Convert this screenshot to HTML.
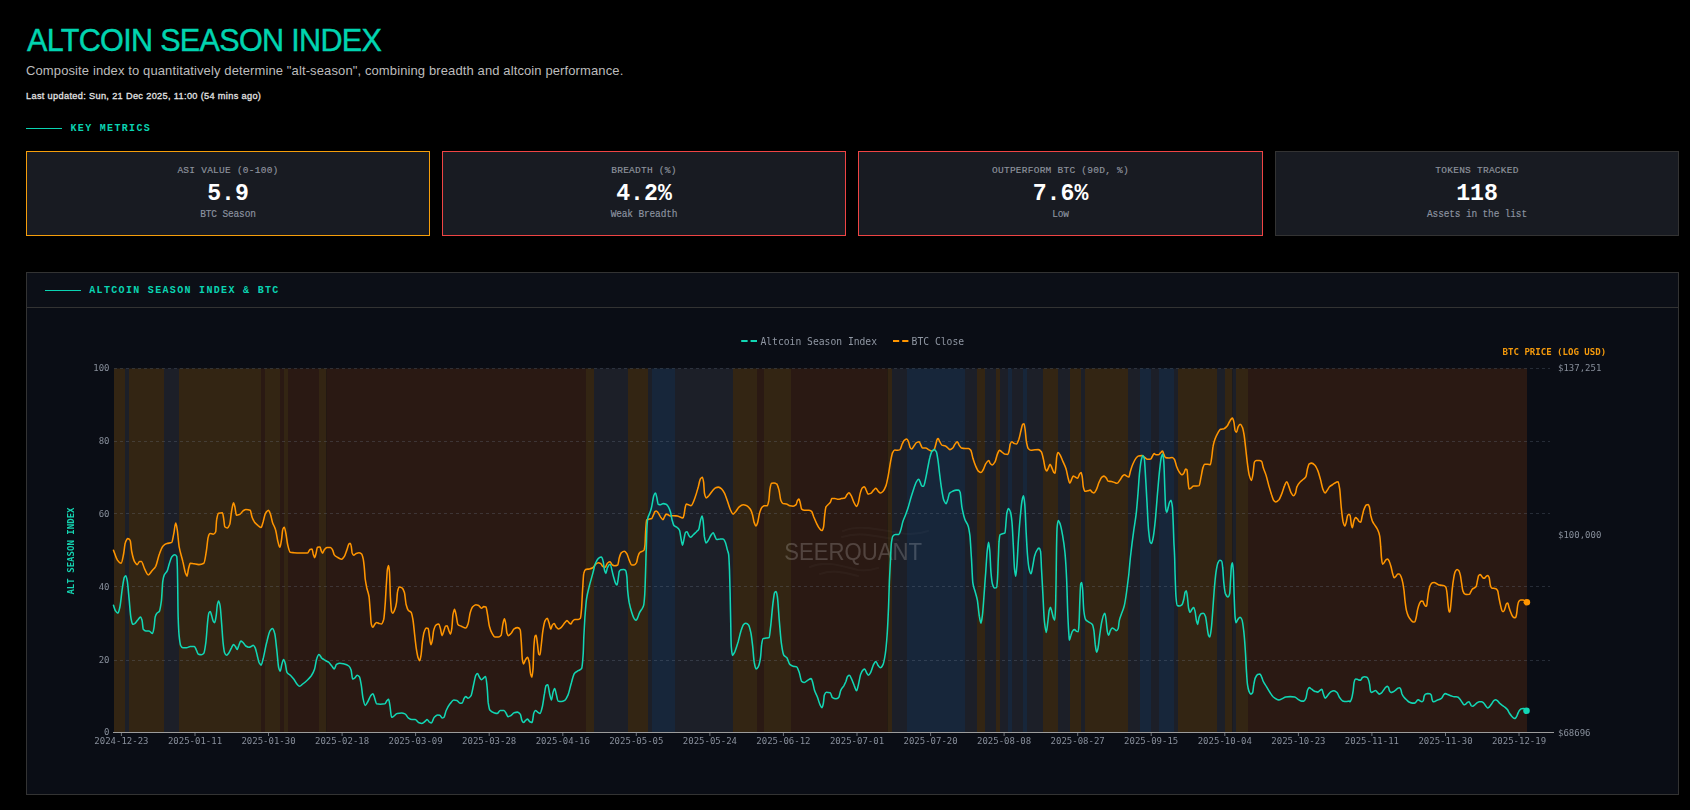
<!DOCTYPE html>
<html lang="en"><head><meta charset="utf-8"><title>Altcoin Season Index</title>
<style>
html,body{margin:0;padding:0;background:#000;}
body{width:1690px;height:810px;position:relative;overflow:hidden;font-family:"Liberation Sans",sans-serif;color:#fff;}
.abs{position:absolute;white-space:nowrap;line-height:1;}
h1{margin:0;font-weight:400;font-size:32px;color:#00d4b0;left:27px;top:24.3px;letter-spacing:-0.72px;transform:scaleX(0.955);transform-origin:0 0;-webkit-text-stroke:0.45px #00d4b0;}
.sub{left:26px;top:64px;font-size:13px;color:#bdbdbd;letter-spacing:0.115px;}
.upd{left:26px;top:91.6px;font-size:9.2px;color:#e4e4e4;font-weight:400;-webkit-text-stroke:0.28px #e4e4e4;letter-spacing:0.34px;}
.sec{font-family:"Liberation Mono",monospace;font-weight:700;font-size:10px;color:#0ad4b2;letter-spacing:1.32px;}
.bar{position:absolute;height:1px;background:#0ad4b2;}
.card{position:absolute;top:151px;width:404.00px;height:85px;box-sizing:border-box;background:#181b22;border:1px solid #333;text-align:center;font-family:"Liberation Mono",monospace;}
.card div{position:absolute;left:0;right:0;white-space:nowrap;line-height:1;}
.cl{top:13.7px;font-size:9.5px;color:#8f949e;letter-spacing:0.25px;-webkit-text-stroke:0.15px #8f949e;}
.cv{top:30.5px;font-size:23.2px;font-weight:700;color:#fff;}
.cs{top:58px;font-size:9.5px;color:#8c93a0;letter-spacing:-0.15px;-webkit-text-stroke:0.15px #8c93a0;transform:scaleY(1.13);transform-origin:50% 82%;}
.panel{position:absolute;left:26px;top:272px;width:1653px;height:523px;box-sizing:border-box;background:#0a0d15;border:1px solid #333;}
.phead{position:absolute;left:0;right:0;top:0;height:34px;border-bottom:1px solid #333;background:#0c0f17;}
svg{position:absolute;left:0;top:0;will-change:transform;}
svg text{font-family:"DejaVu Sans Mono","Liberation Mono",monospace;}
.tk{font-size:9px;fill:#878e9a;}
.lg{font-size:9.7px;fill:#9097a3;}
.at{font-size:9.05px;font-weight:700;}
</style></head>
<body>
<h1 class="abs">ALTCOIN SEASON INDEX</h1>
<div class="abs sub">Composite index to quantitatively determine "alt-season", combining breadth and altcoin performance.</div>
<div class="abs upd">Last updated: Sun, 21 Dec 2025, 11:00 (54 mins ago)</div>
<div class="bar" style="left:26px;top:128px;width:36px"></div>
<div class="abs sec" style="left:70.5px;top:124px">KEY METRICS</div>
<div class="card" style="left:26px;width:404px;border-color:#f59e0b"><div class="cl">ASI VALUE (0-100)</div><div class="cv">5.9</div><div class="cs">BTC Season</div></div>
<div class="card" style="left:442px;width:404px;border-color:#ef4444"><div class="cl">BREADTH (%)</div><div class="cv">4.2%</div><div class="cs">Weak Breadth</div></div>
<div class="card" style="left:858px;width:405px;border-color:#ef4444"><div class="cl">OUTPERFORM BTC (90D, %)</div><div class="cv">7.6%</div><div class="cs">Low</div></div>
<div class="card" style="left:1275px;width:404px;border-color:#333333"><div class="cl">TOKENS TRACKED</div><div class="cv">118</div><div class="cs">Assets in the list</div></div>

<div class="panel"><div class="phead"></div></div>
<div class="bar" style="left:45px;top:290px;width:36px"></div>
<div class="abs sec" style="left:89.3px;top:286px">ALTCOIN SEASON INDEX &amp; BTC</div>
<svg width="1690" height="810" viewBox="0 0 1690 810">
<rect x="114" y="368.5" width="11" height="364.0" fill="#332513"/>
<rect x="125" y="368.5" width="4" height="364.0" fill="#1c1f28"/>
<rect x="129" y="368.5" width="35" height="364.0" fill="#332513"/>
<rect x="164" y="368.5" width="15" height="364.0" fill="#1c1f28"/>
<rect x="179" y="368.5" width="82" height="364.0" fill="#332513"/>
<rect x="261" y="368.5" width="4" height="364.0" fill="#2a1913"/>
<rect x="265" y="368.5" width="15" height="364.0" fill="#332513"/>
<rect x="280" y="368.5" width="4" height="364.0" fill="#2a1913"/>
<rect x="284" y="368.5" width="4" height="364.0" fill="#332513"/>
<rect x="288" y="368.5" width="31" height="364.0" fill="#2a1913"/>
<rect x="319" y="368.5" width="7.5" height="364.0" fill="#332513"/>
<rect x="326.5" y="368.5" width="259.5" height="364.0" fill="#2a1913"/>
<rect x="586" y="368.5" width="8" height="364.0" fill="#332513"/>
<rect x="594" y="368.5" width="34" height="364.0" fill="#1c1f28"/>
<rect x="628" y="368.5" width="20" height="364.0" fill="#332513"/>
<rect x="648" y="368.5" width="4" height="364.0" fill="#1c1f28"/>
<rect x="652" y="368.5" width="23" height="364.0" fill="#17263a"/>
<rect x="675" y="368.5" width="58" height="364.0" fill="#1c1f28"/>
<rect x="733" y="368.5" width="24" height="364.0" fill="#332513"/>
<rect x="757" y="368.5" width="7" height="364.0" fill="#2a1913"/>
<rect x="764" y="368.5" width="27" height="364.0" fill="#332513"/>
<rect x="791" y="368.5" width="96.5" height="364.0" fill="#2a1913"/>
<rect x="887.5" y="368.5" width="4.5" height="364.0" fill="#332513"/>
<rect x="892" y="368.5" width="15" height="364.0" fill="#1c1f28"/>
<rect x="907" y="368.5" width="58" height="364.0" fill="#17263a"/>
<rect x="965" y="368.5" width="12" height="364.0" fill="#1c1f28"/>
<rect x="977" y="368.5" width="8" height="364.0" fill="#332513"/>
<rect x="985" y="368.5" width="11" height="364.0" fill="#1c1f28"/>
<rect x="996" y="368.5" width="4" height="364.0" fill="#332513"/>
<rect x="1000" y="368.5" width="8" height="364.0" fill="#1c1f28"/>
<rect x="1008" y="368.5" width="4" height="364.0" fill="#17263a"/>
<rect x="1012" y="368.5" width="11" height="364.0" fill="#1c1f28"/>
<rect x="1023" y="368.5" width="4" height="364.0" fill="#17263a"/>
<rect x="1027" y="368.5" width="16" height="364.0" fill="#1c1f28"/>
<rect x="1043" y="368.5" width="15" height="364.0" fill="#332513"/>
<rect x="1058" y="368.5" width="12" height="364.0" fill="#1c1f28"/>
<rect x="1070" y="368.5" width="11" height="364.0" fill="#332513"/>
<rect x="1081" y="368.5" width="4" height="364.0" fill="#1c1f28"/>
<rect x="1085" y="368.5" width="43" height="364.0" fill="#332513"/>
<rect x="1128" y="368.5" width="12" height="364.0" fill="#1c1f28"/>
<rect x="1140" y="368.5" width="11" height="364.0" fill="#17263a"/>
<rect x="1151" y="368.5" width="8" height="364.0" fill="#1c1f28"/>
<rect x="1159" y="368.5" width="15" height="364.0" fill="#17263a"/>
<rect x="1174" y="368.5" width="4" height="364.0" fill="#1c1f28"/>
<rect x="1178" y="368.5" width="39" height="364.0" fill="#332513"/>
<rect x="1217" y="368.5" width="8" height="364.0" fill="#1c1f28"/>
<rect x="1225" y="368.5" width="7.5" height="364.0" fill="#332513"/>
<rect x="1232.5" y="368.5" width="3.5" height="364.0" fill="#1c1f28"/>
<rect x="1236" y="368.5" width="12" height="364.0" fill="#332513"/>
<rect x="1248" y="368.5" width="279" height="364.0" fill="#2a1913"/>
<line x1="113.5" x2="1550.3" y1="660.5" y2="660.5" stroke="#7d8aa0" stroke-opacity="0.25" stroke-width="1" stroke-dasharray="3 3" shape-rendering="crispEdges"/>
<line x1="113.5" x2="1550.3" y1="586.5" y2="586.5" stroke="#7d8aa0" stroke-opacity="0.25" stroke-width="1" stroke-dasharray="3 3" shape-rendering="crispEdges"/>
<line x1="113.5" x2="1550.3" y1="513.5" y2="513.5" stroke="#7d8aa0" stroke-opacity="0.25" stroke-width="1" stroke-dasharray="3 3" shape-rendering="crispEdges"/>
<line x1="113.5" x2="1550.3" y1="441.5" y2="441.5" stroke="#7d8aa0" stroke-opacity="0.25" stroke-width="1" stroke-dasharray="3 3" shape-rendering="crispEdges"/>
<line x1="113.5" x2="1550.3" y1="368.5" y2="368.5" stroke="#7d8aa0" stroke-opacity="0.25" stroke-width="1" stroke-dasharray="3 3" shape-rendering="crispEdges"/>
<rect x="113" y="732" width="1441" height="1" fill="#9c9c9c"/>
<text class="tk" x="109.5" y="735.3" text-anchor="end">0</text>
<text class="tk" x="109.5" y="662.5" text-anchor="end">20</text>
<text class="tk" x="109.5" y="589.7" text-anchor="end">40</text>
<text class="tk" x="109.5" y="516.9" text-anchor="end">60</text>
<text class="tk" x="109.5" y="444.1" text-anchor="end">80</text>
<text class="tk" x="109.5" y="371.3" text-anchor="end">100</text>
<rect x="120.9" y="733" width="1" height="3" fill="#6f747c"/>
<text class="tk" x="121.4" y="744.1" text-anchor="middle">2024-12-23</text>
<rect x="194.5" y="733" width="1" height="3" fill="#6f747c"/>
<text class="tk" x="195.0" y="744.1" text-anchor="middle">2025-01-11</text>
<rect x="268.0" y="733" width="1" height="3" fill="#6f747c"/>
<text class="tk" x="268.5" y="744.1" text-anchor="middle">2025-01-30</text>
<rect x="341.6" y="733" width="1" height="3" fill="#6f747c"/>
<text class="tk" x="342.1" y="744.1" text-anchor="middle">2025-02-18</text>
<rect x="415.1" y="733" width="1" height="3" fill="#6f747c"/>
<text class="tk" x="415.6" y="744.1" text-anchor="middle">2025-03-09</text>
<rect x="488.7" y="733" width="1" height="3" fill="#6f747c"/>
<text class="tk" x="489.2" y="744.1" text-anchor="middle">2025-03-28</text>
<rect x="562.3" y="733" width="1" height="3" fill="#6f747c"/>
<text class="tk" x="562.8" y="744.1" text-anchor="middle">2025-04-16</text>
<rect x="635.8" y="733" width="1" height="3" fill="#6f747c"/>
<text class="tk" x="636.3" y="744.1" text-anchor="middle">2025-05-05</text>
<rect x="709.4" y="733" width="1" height="3" fill="#6f747c"/>
<text class="tk" x="709.9" y="744.1" text-anchor="middle">2025-05-24</text>
<rect x="782.9" y="733" width="1" height="3" fill="#6f747c"/>
<text class="tk" x="783.4" y="744.1" text-anchor="middle">2025-06-12</text>
<rect x="856.5" y="733" width="1" height="3" fill="#6f747c"/>
<text class="tk" x="857.0" y="744.1" text-anchor="middle">2025-07-01</text>
<rect x="930.1" y="733" width="1" height="3" fill="#6f747c"/>
<text class="tk" x="930.6" y="744.1" text-anchor="middle">2025-07-20</text>
<rect x="1003.6" y="733" width="1" height="3" fill="#6f747c"/>
<text class="tk" x="1004.1" y="744.1" text-anchor="middle">2025-08-08</text>
<rect x="1077.2" y="733" width="1" height="3" fill="#6f747c"/>
<text class="tk" x="1077.7" y="744.1" text-anchor="middle">2025-08-27</text>
<rect x="1150.7" y="733" width="1" height="3" fill="#6f747c"/>
<text class="tk" x="1151.2" y="744.1" text-anchor="middle">2025-09-15</text>
<rect x="1224.3" y="733" width="1" height="3" fill="#6f747c"/>
<text class="tk" x="1224.8" y="744.1" text-anchor="middle">2025-10-04</text>
<rect x="1297.9" y="733" width="1" height="3" fill="#6f747c"/>
<text class="tk" x="1298.4" y="744.1" text-anchor="middle">2025-10-23</text>
<rect x="1371.4" y="733" width="1" height="3" fill="#6f747c"/>
<text class="tk" x="1371.9" y="744.1" text-anchor="middle">2025-11-11</text>
<rect x="1445.0" y="733" width="1" height="3" fill="#6f747c"/>
<text class="tk" x="1445.5" y="744.1" text-anchor="middle">2025-11-30</text>
<rect x="1518.5" y="733" width="1" height="3" fill="#6f747c"/>
<text class="tk" x="1519.0" y="744.1" text-anchor="middle">2025-12-19</text>
<text class="tk" x="1558" y="371.3">$137,251</text>
<text class="tk" x="1558" y="538">$100,000</text>
<text class="tk" x="1558" y="735.6">$68696</text>
<text class="at" fill="#f59a0c" x="1502.6" y="354.6">BTC PRICE (LOG USD)</text>
<text class="at" fill="#14d3b0" transform="translate(73.8,551) rotate(-90)" text-anchor="middle">ALT SEASON INDEX</text>
<g fill="none" stroke="#ffffff" stroke-opacity="0.028" stroke-width="2.2" stroke-linecap="round"><path d="M843,531 C860,524 880,530 900,533 C912,535 920,534 928,531"/><path d="M842,537 C860,531 880,537 898,540"/><path d="M810,567 C826,560 842,566 858,570 C866,571 872,570 878,568"/><path d="M820,574 C834,569 846,573 858,576"/></g>
<text x="784.3" y="560" style="font-family:'Liberation Sans',sans-serif;font-size:23.3px" fill="#ffffff" fill-opacity="0.19" textLength="137.8" lengthAdjust="spacingAndGlyphs">SEERQUANT</text>
<path d="M113.5,550.2C114.8,553.5 116.1,558.4 117.4,560.1C118.6,561.7 119.9,563.3 121.1,563.3C121.9,563.3 122.8,557.9 123.6,554.0C124.2,551.2 124.7,544.4 125.3,542.8C126.1,540.5 127.0,538.6 127.8,538.6C128.6,538.6 129.4,539.2 130.2,540.4C130.7,541.0 131.2,549.0 131.7,551.5C132.7,556.4 133.7,560.2 134.7,561.9C135.5,563.2 136.3,564.6 137.2,564.6C138.0,564.6 138.8,561.4 139.6,561.4C140.2,561.4 140.8,561.4 141.4,561.4C142.4,561.4 143.5,566.7 144.6,568.8C145.8,571.2 147.0,574.9 148.3,574.9C149.5,574.9 150.7,572.2 152.0,570.7C153.2,569.3 154.4,568.5 155.7,566.3C156.9,564.1 158.1,557.2 159.4,554.0C160.6,550.7 161.9,547.3 163.1,546.0C164.3,544.8 165.6,544.0 166.8,543.6C168.4,543.0 170.1,543.2 171.7,542.4C172.4,542.0 173.0,537.3 173.7,534.2C174.4,531.1 175.0,523.1 175.7,523.1C176.2,523.1 176.7,526.5 177.2,529.3C177.8,532.9 178.5,542.8 179.1,546.5C180.4,553.6 181.6,556.1 182.8,561.4C183.7,564.9 184.5,570.1 185.3,572.5C185.9,574.1 186.5,576.2 187.0,576.2C187.5,576.2 188.0,570.7 188.5,568.8C189.1,566.5 189.7,563.3 190.2,563.3C191.5,563.3 192.7,563.7 193.9,563.8C195.6,564.1 197.2,564.6 198.9,564.6C200.5,564.6 202.2,564.2 203.8,563.3C204.7,562.9 205.5,556.3 206.3,551.5C207.0,547.6 207.6,538.6 208.3,536.7C208.8,535.0 209.4,533.5 210.0,533.5C211.1,533.5 212.1,534.2 213.2,534.2C214.0,534.2 214.9,533.5 215.7,531.7C216.0,531.0 216.3,521.1 216.7,519.4C217.3,515.9 218.0,513.4 218.6,513.2C219.9,512.9 221.1,512.7 222.3,512.7C222.8,512.7 223.2,515.9 223.6,518.1C224.0,520.4 224.4,526.4 224.8,526.8C225.6,527.6 226.5,528.0 227.3,528.0C228.1,528.0 228.9,526.4 229.8,524.3C230.3,522.8 230.9,515.2 231.5,512.0C232.1,508.3 232.8,502.8 233.5,502.8C234.0,502.8 234.4,505.2 234.9,507.0C235.4,508.9 235.9,515.2 236.4,515.2C237.5,515.2 238.6,514.8 239.6,514.4C240.9,514.0 242.1,511.5 243.3,510.7C244.2,510.2 245.0,509.5 245.8,509.5C247.3,509.5 248.8,509.7 250.2,510.2C250.8,510.5 251.4,515.4 252.0,516.9C252.8,519.1 253.6,520.7 254.4,521.9C255.7,523.5 256.9,524.6 258.1,525.6C259.1,526.3 260.1,527.5 261.1,527.5C261.8,527.5 262.4,523.9 263.1,521.9C263.9,519.3 264.7,514.5 265.6,513.2C266.5,511.6 267.5,510.2 268.5,510.2C269.2,510.2 269.8,512.6 270.5,514.4C271.2,516.3 271.8,520.4 272.5,522.4C273.5,525.3 274.4,526.1 275.4,529.3C276.3,531.9 277.1,538.6 277.9,541.6C278.6,544.0 279.2,547.3 279.9,547.3C280.5,547.3 281.0,542.6 281.6,539.1C282.0,536.7 282.4,530.2 282.8,529.3C283.3,528.1 283.8,527.3 284.3,527.3C284.8,527.3 285.3,530.6 285.8,533.0C286.5,536.1 287.1,542.7 287.8,545.3C288.6,548.5 289.4,552.0 290.2,552.2C291.5,552.6 292.7,552.6 293.9,552.7C296.0,552.9 298.1,553.0 300.1,553.0C302.6,553.0 305.1,553.0 307.5,553.0C308.4,553.0 309.2,549.9 310.0,549.5C310.7,549.2 311.3,549.0 312.0,549.0C312.4,549.0 312.8,552.7 313.2,554.0C313.7,555.5 314.2,557.6 314.7,557.6C315.2,557.6 315.7,554.6 316.2,552.7C316.6,551.1 317.0,547.4 317.4,547.3C318.0,547.1 318.6,547.0 319.1,547.0C319.4,547.0 319.7,547.1 320.0,547.1C320.4,547.2 320.9,550.1 321.3,551.0C321.7,551.9 322.2,553.1 322.6,553.1C323.2,553.1 323.7,550.4 324.3,549.7C325.2,548.7 326.0,547.6 326.9,547.5C328.1,547.4 329.2,547.4 330.4,547.4C331.1,547.4 331.8,548.5 332.5,549.7C333.1,550.6 333.7,554.1 334.3,554.9C335.3,556.2 336.3,556.6 337.3,557.2C338.7,558.1 340.2,559.2 341.6,559.2C342.5,559.2 343.3,557.8 344.2,556.6C345.1,555.4 345.9,552.4 346.8,550.1C347.5,548.2 348.2,544.9 348.9,544.1C349.3,543.7 349.7,543.2 350.1,543.2C350.4,543.2 350.8,544.3 351.1,545.4C351.5,546.5 351.8,551.7 352.1,552.7C352.6,554.1 353.1,555.3 353.5,555.3C354.5,555.3 355.4,553.8 356.3,553.4C357.2,553.1 358.0,552.7 358.9,552.7C359.8,552.7 360.6,553.1 361.5,553.8C362.1,554.2 362.6,556.2 363.2,558.8C363.5,560.1 363.8,563.0 364.1,565.7C364.5,569.3 364.9,576.0 365.2,579.0C365.8,583.0 366.3,585.5 366.8,588.0C367.6,591.5 368.3,592.2 369.1,597.0C369.4,599.4 369.8,606.0 370.2,610.5C370.6,614.9 370.9,622.6 371.3,624.0C371.8,625.9 372.4,627.3 372.9,627.3C373.5,627.3 374.1,625.2 374.7,624.4C375.3,623.6 375.9,622.4 376.5,622.4C377.4,622.4 378.3,623.3 379.2,623.5C379.9,623.7 380.7,624.0 381.4,624.0C382.2,624.0 382.9,622.1 383.7,619.5C384.2,617.6 384.7,610.6 385.2,603.7C385.6,598.8 386.0,589.2 386.4,583.5C386.8,577.8 387.1,570.7 387.5,568.9C387.9,567.0 388.3,565.5 388.6,565.5C388.9,565.5 389.2,568.7 389.5,572.2C389.8,575.8 390.1,591.6 390.4,597.0C390.8,603.7 391.2,610.6 391.6,611.6C391.9,612.5 392.3,613.2 392.7,613.2C393.4,613.2 394.2,611.2 394.9,609.3C395.4,608.0 396.0,605.8 396.5,602.6C396.9,600.3 397.2,592.9 397.6,591.4C398.2,588.8 398.8,586.9 399.4,586.9C400.3,586.9 401.2,587.3 402.1,588.0C402.9,588.5 403.6,590.1 404.4,592.5C405.0,594.4 405.6,602.6 406.2,604.8C406.9,607.6 407.7,609.7 408.4,610.5C409.3,611.4 410.2,611.2 411.1,612.3C411.7,613.0 412.3,616.2 412.9,619.5C413.5,622.8 414.1,630.0 414.7,635.2C415.2,639.7 415.8,645.3 416.3,648.7C416.9,652.5 417.5,656.1 418.1,657.7C418.6,659.1 419.1,660.6 419.7,660.6C420.1,660.6 420.6,657.9 421.0,655.4C421.5,652.9 421.9,645.2 422.4,642.0C423.0,637.6 423.6,633.4 424.2,631.8C424.9,629.8 425.7,628.0 426.4,628.0C427.0,628.0 427.6,628.2 428.2,628.5C428.6,628.7 429.1,634.8 429.6,637.5C430.0,640.1 430.4,644.6 430.9,644.6C431.3,644.6 431.8,642.7 432.2,640.8C432.7,639.0 433.2,632.5 433.6,630.7C434.4,627.8 435.1,625.6 435.9,625.1C436.8,624.4 437.8,624.0 438.8,624.0C439.3,624.0 439.8,626.7 440.4,628.5C440.9,630.4 441.6,635.6 442.1,635.6C442.7,635.6 443.3,632.4 443.9,630.7C444.5,629.2 445.0,626.5 445.5,626.2C446.0,625.9 446.6,625.8 447.1,625.8C447.7,625.8 448.3,629.3 448.9,630.7C449.4,632.0 449.9,634.1 450.5,634.1C450.9,634.1 451.4,631.3 451.8,628.5C452.2,626.1 452.6,617.1 452.9,615.0C453.5,612.0 454.0,609.3 454.5,609.3C455.0,609.3 455.6,612.7 456.1,615.0C456.7,617.5 457.3,623.8 457.9,624.4C459.0,625.6 460.1,625.7 461.3,626.2C462.8,626.9 464.3,628.0 465.8,628.0C466.5,628.0 467.3,625.9 468.0,624.0C468.8,622.0 469.5,615.2 470.2,612.7C471.0,610.2 471.8,607.9 472.5,607.1C473.6,605.9 474.8,604.8 475.9,604.8C476.8,604.8 477.7,605.2 478.6,605.5C479.5,605.9 480.5,608.2 481.5,608.2C482.2,608.2 483.0,606.6 483.8,606.6C484.5,606.6 485.2,606.8 486.0,607.1C486.5,607.3 487.0,612.1 487.6,615.0C488.2,618.3 488.8,623.9 489.4,626.2C490.3,629.7 491.2,631.9 492.1,633.4C493.0,635.0 494.0,637.0 495.0,637.0C496.1,637.0 497.2,637.0 498.4,637.0C499.3,637.0 500.2,636.3 501.1,635.2C501.7,634.4 502.3,626.5 502.9,624.0C503.4,621.7 503.9,618.8 504.4,618.8C504.9,618.8 505.3,621.6 505.8,624.0C506.2,625.9 506.5,631.8 506.9,633.0C507.4,634.5 508.0,635.6 508.5,635.6C509.5,635.6 510.4,634.1 511.4,633.0C512.3,631.9 513.2,629.5 514.1,628.9C515.2,628.2 516.4,627.6 517.5,627.6C518.4,627.6 519.3,628.1 520.2,629.6C520.6,630.2 520.9,637.1 521.3,642.0C521.7,646.8 522.0,657.8 522.4,659.9C522.8,662.1 523.2,664.0 523.5,664.0C524.1,664.0 524.8,660.9 525.4,659.9C526.1,658.8 526.9,657.2 527.6,657.2C528.1,657.2 528.6,659.8 529.2,662.2C529.6,664.3 530.1,671.5 530.5,673.4C531.0,675.3 531.4,677.2 531.9,677.2C532.2,677.2 532.6,673.3 533.0,668.9C533.3,665.4 533.6,650.5 533.9,646.5C534.3,641.4 534.6,637.0 535.0,636.3C535.4,635.7 535.8,635.2 536.1,635.2C536.6,635.2 537.0,641.0 537.5,644.2C537.9,647.4 538.4,653.8 538.8,654.3C539.2,654.7 539.6,655.0 540.0,655.0C540.3,655.0 540.7,649.5 541.1,646.5C541.7,641.6 542.3,634.3 542.9,630.7C543.6,626.2 544.4,621.9 545.1,620.6C545.8,619.4 546.5,618.3 547.2,618.3C547.8,618.3 548.4,621.1 549.0,622.8C549.6,624.6 550.2,629.1 550.8,629.1C551.3,629.1 551.8,625.8 552.3,625.1C552.9,624.3 553.5,623.5 554.1,623.5C554.9,623.5 555.6,626.6 556.4,627.3C557.1,628.1 557.9,628.9 558.6,628.9C559.5,628.9 560.4,628.1 561.3,627.3C562.5,626.4 563.6,624.1 564.7,622.8C565.5,622.0 566.2,620.6 567.0,620.6C567.7,620.6 568.5,622.2 569.2,622.8C569.7,623.3 570.2,624.0 570.8,624.0C571.4,624.0 572.0,621.9 572.6,621.3C573.3,620.5 574.1,619.5 574.8,619.5C575.9,619.5 577.1,619.5 578.2,619.5C578.9,619.5 579.7,619.1 580.4,618.3C580.8,617.9 581.2,612.7 581.6,608.2C581.9,603.7 582.3,593.6 582.7,588.0C583.1,582.3 583.4,574.8 583.8,573.4C584.4,571.0 585.0,569.8 585.6,569.5C586.9,569.1 588.2,569.2 589.4,568.9C590.6,568.6 591.7,568.3 592.8,567.7C593.7,567.3 594.6,565.1 595.5,564.4C596.5,563.6 597.5,562.8 598.4,562.8C599.2,562.8 599.9,563.2 600.7,563.7C601.4,564.1 602.2,566.3 602.9,566.6C603.7,567.0 604.4,567.3 605.2,567.3C605.9,567.3 606.7,563.9 607.4,563.2C608.3,562.5 609.1,561.8 610.0,561.8C610.8,561.8 611.6,564.6 612.4,565.0C613.2,565.4 614.0,565.8 614.8,565.8C615.8,565.8 616.7,565.5 617.7,565.0C618.2,564.7 618.8,559.5 619.3,557.8C619.9,555.7 620.6,553.5 621.2,552.9C622.3,552.0 623.4,551.3 624.4,551.3C625.2,551.3 626.0,552.6 626.9,553.8C627.6,554.9 628.5,558.3 629.2,560.2C630.1,562.0 630.9,565.0 631.7,565.0C632.5,565.0 633.3,565.0 634.1,565.0C634.9,565.0 635.7,563.9 636.5,562.6C637.0,561.7 637.5,557.7 638.1,556.1C638.6,554.6 639.1,553.1 639.7,552.6C640.5,551.9 641.3,551.8 642.1,551.3C642.7,551.0 643.4,550.9 644.0,550.1C644.3,549.6 644.7,547.7 645.0,544.9C645.2,543.1 645.4,535.4 645.6,532.1C645.9,527.1 646.3,520.3 646.6,520.0C647.2,519.5 647.9,519.5 648.5,519.2C649.6,518.9 650.6,519.0 651.7,518.5C652.2,518.2 652.8,516.4 653.3,515.2C653.9,514.1 654.4,512.0 654.9,511.6C655.4,511.2 655.8,510.9 656.2,510.9C656.9,510.9 657.5,512.0 658.1,512.8C658.9,513.8 659.7,515.8 660.5,516.9C661.3,517.9 662.1,519.6 662.9,519.6C663.5,519.6 664.0,517.8 664.5,516.9C665.1,515.9 665.6,514.1 666.1,514.1C666.8,514.1 667.4,514.5 668.1,514.8C668.8,515.1 669.5,516.0 670.2,516.0C671.2,516.0 672.3,515.7 673.4,515.7C674.7,515.7 676.0,515.9 677.4,516.0C678.5,516.2 679.5,517.0 680.6,517.3C681.4,517.6 682.2,518.0 683.0,518.0C683.4,518.0 683.7,516.1 684.1,514.4C684.4,513.1 684.8,509.4 685.1,508.0C685.5,506.2 685.9,504.0 686.4,504.0C687.1,504.0 687.9,504.6 688.6,504.8C689.4,505.1 690.2,505.6 691.0,505.6C692.5,505.6 693.9,500.6 695.3,496.8C696.3,494.2 697.3,490.1 698.3,486.7C699.0,484.1 699.8,479.8 700.5,478.8C701.1,478.0 701.7,477.2 702.3,477.2C702.8,477.2 703.2,479.5 703.6,482.2C703.9,484.0 704.2,492.0 704.5,493.4C705.1,496.0 705.6,497.9 706.1,497.9C707.0,497.9 707.9,496.6 708.8,495.7C709.9,494.5 711.1,492.5 712.2,491.2C713.3,489.9 714.4,488.2 715.6,487.8C716.5,487.4 717.5,487.1 718.5,487.1C719.5,487.1 720.6,488.0 721.6,488.9C722.6,489.7 723.6,491.5 724.6,493.4C725.5,495.3 726.5,498.6 727.5,501.3C728.4,503.8 729.3,507.2 730.2,509.2C731.2,511.3 732.1,514.1 733.1,514.1C734.0,514.1 734.9,512.4 735.8,511.4C736.9,510.1 738.1,507.8 739.2,506.9C740.5,505.8 741.9,504.7 743.2,504.7C744.3,504.7 745.3,505.0 746.4,505.4C747.6,505.8 748.8,507.1 750.0,508.7C750.7,509.7 751.5,511.5 752.2,513.7C752.9,515.7 753.6,520.9 754.2,522.7C754.9,524.2 755.4,526.0 756.0,526.0C756.6,526.0 757.1,524.2 757.6,522.7C758.2,520.9 758.8,515.8 759.4,513.7C760.2,511.0 760.9,508.4 761.7,507.6C762.6,506.6 763.5,505.8 764.4,505.8C765.3,505.8 766.3,505.8 767.3,505.8C767.8,505.8 768.3,503.0 768.9,500.2C769.2,498.1 769.6,491.0 770.0,488.9C770.5,486.1 771.0,483.5 771.6,483.3C772.4,483.0 773.2,482.9 774.0,482.9C774.9,482.9 775.8,483.3 776.7,484.0C777.5,484.5 778.2,487.3 779.0,490.1C779.6,492.3 780.2,498.7 780.8,500.2C781.5,502.0 782.3,503.4 783.0,503.6C784.2,503.8 785.3,503.8 786.4,504.0C787.5,504.2 788.7,505.6 789.8,505.8C790.9,506.0 792.0,506.2 793.1,506.2C794.1,506.2 795.1,505.6 796.1,504.7C796.6,504.2 797.1,500.9 797.6,500.2C798.1,499.6 798.5,499.1 799.0,499.1C799.5,499.1 799.9,501.9 800.4,503.6C800.8,505.2 801.2,508.8 801.7,509.2C802.6,509.9 803.5,510.3 804.4,510.3C805.9,510.3 807.4,510.3 808.9,510.3C809.8,510.3 810.7,510.8 811.6,511.4C812.3,512.0 813.1,515.2 813.8,517.0C814.8,519.4 815.8,521.9 816.8,523.8C817.7,525.7 818.7,527.7 819.7,528.7C820.4,529.5 821.2,530.5 821.9,530.5C822.5,530.5 823.0,529.1 823.5,527.2C823.9,525.8 824.3,518.9 824.6,515.9C825.1,512.3 825.5,507.8 826.0,506.9C826.7,505.6 827.3,505.4 828.0,504.7C828.8,503.9 829.5,503.5 830.2,502.4C830.8,501.7 831.3,498.7 831.8,498.6C832.8,498.4 833.8,498.4 834.8,498.4C835.9,498.4 837.0,499.3 838.1,499.3C839.2,499.3 840.4,498.8 841.5,498.6C842.6,498.4 843.7,498.3 844.9,497.9C845.6,497.7 846.4,495.4 847.1,494.6C847.7,493.8 848.3,492.8 848.9,492.8C849.7,492.8 850.4,494.4 851.2,495.7C852.1,497.2 853.0,500.8 853.9,502.4C854.8,504.2 855.8,506.5 856.8,506.5C857.3,506.5 857.8,504.2 858.4,502.4C859.0,500.4 859.6,495.5 860.2,493.4C860.9,490.9 861.7,488.5 862.4,487.8C863.1,487.2 863.8,486.7 864.4,486.7C865.0,486.7 865.6,488.8 866.2,490.1C866.8,491.3 867.4,494.1 868.0,494.1C868.9,494.1 869.8,493.8 870.7,493.4C871.7,493.0 872.7,491.0 873.6,490.1C874.4,489.4 875.1,488.3 875.9,488.3C876.6,488.3 877.4,490.4 878.1,491.2C878.9,491.9 879.6,493.0 880.4,493.0C881.3,493.0 882.2,492.1 883.1,491.2C884.1,490.2 885.0,488.2 886.0,485.6C886.8,483.5 887.5,479.3 888.3,475.4C889.0,471.6 889.8,465.8 890.5,461.9C891.2,458.5 891.9,454.3 892.5,452.9C893.3,451.4 894.0,450.0 894.8,450.0C895.8,450.0 896.7,450.3 897.7,450.3C898.5,450.3 899.2,450.0 900.0,449.6C900.7,449.2 901.5,445.5 902.2,444.0C903.0,442.4 903.7,440.7 904.5,440.1C905.2,439.6 906.0,439.0 906.7,439.0C907.3,439.0 907.9,440.4 908.5,441.7C909.0,442.8 909.6,446.5 910.1,447.3C910.6,448.2 911.1,448.9 911.7,448.9C912.5,448.9 913.3,446.8 914.1,445.8C915.0,444.6 915.9,442.8 916.8,442.4C917.6,442.0 918.3,441.7 919.1,441.7C919.7,441.7 920.3,444.0 920.9,445.1C921.4,446.1 921.9,448.0 922.5,448.0C923.6,448.0 924.7,448.0 925.8,448.0C926.7,448.0 927.6,449.1 928.5,449.6C929.5,450.1 930.5,451.1 931.5,451.1C932.3,451.1 933.2,450.5 934.1,449.6C934.7,449.0 935.3,446.1 935.9,444.0C936.3,442.6 936.7,440.0 937.1,439.5C937.4,439.0 937.8,438.6 938.2,438.6C938.7,438.6 939.2,440.8 939.8,441.7C940.5,443.0 941.3,444.8 942.0,445.1C943.0,445.5 944.0,445.4 944.9,445.8C945.7,446.0 946.4,446.8 947.2,447.3C948.1,448.0 949.0,449.6 949.9,449.6C950.9,449.6 951.8,448.8 952.8,448.0C953.6,447.4 954.3,444.9 955.1,444.0C955.8,443.0 956.6,441.7 957.3,441.7C957.9,441.7 958.5,444.1 959.1,445.1C959.9,446.2 960.6,447.8 961.4,448.0C962.6,448.3 963.9,448.5 965.2,448.5C966.3,448.5 967.4,448.5 968.5,448.5C969.3,448.5 970.0,449.3 970.8,450.3C971.5,451.2 972.3,456.1 973.0,458.6C973.9,461.5 974.9,464.5 975.8,466.4C976.7,468.5 977.7,470.7 978.7,471.4C979.4,472.0 980.2,472.5 980.9,472.5C981.7,472.5 982.4,471.0 983.2,469.8C984.1,468.3 985.1,464.4 986.1,463.1C987.0,461.8 987.9,460.4 988.8,460.4C989.2,460.4 989.6,462.6 990.0,463.1C990.8,464.0 991.5,464.9 992.2,464.9C993.1,464.9 994.1,463.4 995.0,461.9C995.8,460.6 996.6,456.0 997.4,454.1C998.1,452.5 998.8,450.3 999.4,450.3C1000.2,450.3 1000.9,451.3 1001.7,451.8C1002.7,452.5 1003.6,453.8 1004.6,454.1C1005.6,454.3 1006.6,454.5 1007.5,454.5C1008.1,454.5 1008.6,452.6 1009.1,450.7C1009.5,449.4 1009.9,444.9 1010.2,444.0C1010.8,442.7 1011.3,441.7 1011.8,441.7C1012.6,441.7 1013.5,443.3 1014.3,443.5C1015.0,443.7 1015.8,444.0 1016.5,444.0C1017.3,444.0 1018.0,441.5 1018.8,439.5C1019.5,437.5 1020.3,433.3 1021.0,430.5C1021.6,428.2 1022.2,424.6 1022.8,424.2C1023.2,423.9 1023.6,423.7 1024.0,423.7C1024.3,423.7 1024.7,426.9 1025.1,429.3C1025.5,432.2 1026.0,439.3 1026.4,441.7C1027.0,445.0 1027.6,447.7 1028.2,448.5C1029.1,449.5 1030.0,450.3 1030.9,450.3C1032.3,450.3 1033.6,449.9 1035.0,449.8C1036.1,449.7 1037.2,449.6 1038.3,449.6C1039.3,449.6 1040.3,450.6 1041.3,451.8C1042.0,452.8 1042.8,456.6 1043.5,459.7C1044.1,462.2 1044.7,467.2 1045.3,468.7C1045.8,469.8 1046.2,470.9 1046.7,470.9C1047.3,470.9 1047.9,468.8 1048.5,467.6C1049.0,466.5 1049.5,464.2 1050.0,464.2C1050.6,464.2 1051.2,466.3 1051.8,467.6C1052.4,468.9 1053.0,471.3 1053.6,472.1C1054.1,472.6 1054.5,473.2 1055.0,473.2C1055.3,473.2 1055.6,469.1 1055.9,466.4C1056.2,463.8 1056.5,457.7 1056.8,456.3C1057.2,454.2 1057.7,452.5 1058.1,452.5C1058.8,452.5 1059.5,454.1 1060.2,455.2C1061.1,456.8 1062.1,459.7 1063.1,461.9C1064.1,464.2 1065.0,465.7 1066.0,468.7C1066.8,471.0 1067.5,476.2 1068.3,478.8C1068.8,480.6 1069.3,483.3 1069.8,483.3C1070.4,483.3 1070.9,481.1 1071.4,479.9C1072.0,478.7 1072.6,476.1 1073.2,476.1C1074.0,476.1 1074.7,476.9 1075.5,477.2C1076.2,477.6 1077.0,478.1 1077.7,478.1C1078.3,478.1 1078.9,475.2 1079.5,474.3C1080.0,473.5 1080.5,472.5 1081.1,472.5C1081.4,472.5 1081.8,474.6 1082.2,476.6C1082.6,478.5 1082.9,485.0 1083.3,486.7C1083.8,489.0 1084.4,491.2 1084.9,491.2C1085.9,491.2 1086.8,490.9 1087.8,490.7C1088.6,490.6 1089.3,490.1 1090.1,490.1C1090.8,490.1 1091.6,491.9 1092.3,492.3C1092.8,492.6 1093.4,493.0 1093.9,493.0C1094.6,493.0 1095.4,491.4 1096.1,490.1C1097.1,488.4 1098.1,484.3 1099.1,482.2C1100.0,480.2 1100.9,477.9 1101.8,477.2C1102.5,476.7 1103.3,476.1 1104.0,476.1C1104.8,476.1 1105.5,477.3 1106.3,478.1C1106.9,478.8 1107.5,480.9 1108.1,481.1C1109.2,481.4 1110.3,481.3 1111.4,481.5C1112.6,481.7 1113.7,482.3 1114.8,482.6C1115.5,482.9 1116.3,483.3 1117.0,483.3C1118.0,483.3 1119.0,481.2 1120.0,479.9C1120.9,478.8 1121.8,476.7 1122.7,475.9C1123.3,475.4 1123.9,474.8 1124.5,474.8C1125.2,474.8 1126.0,475.7 1126.7,476.1C1127.4,476.5 1128.1,477.0 1128.8,477.0C1129.3,477.0 1129.9,472.8 1130.5,470.9C1131.3,468.5 1132.0,466.0 1132.8,464.2C1133.8,461.9 1134.7,459.9 1135.7,458.6C1136.6,457.4 1137.5,456.0 1138.4,455.9C1139.5,455.7 1140.7,455.6 1141.8,455.6C1142.8,455.6 1143.7,456.8 1144.7,457.4C1145.6,458.0 1146.5,459.2 1147.4,459.2C1148.5,459.2 1149.7,459.2 1150.8,459.0C1151.3,458.9 1151.8,457.2 1152.4,456.3C1153.0,455.4 1153.6,453.6 1154.2,453.6C1154.8,453.6 1155.4,454.8 1156.0,454.8C1156.7,454.8 1157.5,454.8 1158.2,454.8C1159.0,454.8 1159.7,453.6 1160.5,452.9C1161.1,452.4 1161.8,451.1 1162.5,451.1C1162.9,451.1 1163.4,453.1 1163.8,454.1C1164.4,455.2 1164.9,457.3 1165.4,457.4C1166.5,457.8 1167.6,457.9 1168.8,457.9C1169.9,457.9 1171.0,457.4 1172.2,457.4C1172.9,457.4 1173.6,458.3 1174.4,459.2C1175.1,460.2 1175.9,464.5 1176.6,466.4C1177.5,468.7 1178.4,470.8 1179.3,472.1C1180.2,473.2 1181.0,474.8 1181.8,474.8C1182.5,474.8 1183.2,474.0 1183.8,473.2C1184.4,472.5 1185.0,469.1 1185.6,469.1C1186.1,469.1 1186.5,469.4 1187.0,469.8C1187.3,470.1 1187.6,477.1 1187.9,479.9C1188.3,483.5 1188.6,488.9 1189.0,488.9C1189.8,488.9 1190.5,488.3 1191.3,487.8C1192.0,487.3 1192.8,486.0 1193.5,486.0C1194.6,486.0 1195.8,486.0 1196.9,486.0C1197.6,486.0 1198.4,485.9 1199.1,485.6C1199.7,485.3 1200.3,480.5 1200.9,477.7C1201.6,474.6 1202.3,469.4 1203.0,467.6C1203.5,465.9 1204.2,464.2 1204.8,464.2C1205.7,464.2 1206.7,464.2 1207.7,464.2C1208.6,464.2 1209.5,464.6 1210.4,464.6C1210.8,464.6 1211.3,460.4 1211.7,457.4C1212.2,454.5 1212.6,448.5 1213.1,446.2C1213.8,442.4 1214.6,440.3 1215.3,438.3C1216.3,435.8 1217.3,433.8 1218.2,432.3C1219.0,431.1 1219.7,429.6 1220.5,429.3C1221.6,428.9 1222.7,429.0 1223.9,428.7C1225.0,428.3 1226.1,427.3 1227.2,426.0C1228.2,424.9 1229.2,421.6 1230.2,420.4C1230.9,419.4 1231.7,418.1 1232.4,418.1C1232.9,418.1 1233.5,420.4 1234.0,422.6C1234.4,424.2 1234.7,429.6 1235.1,430.5C1235.6,431.5 1236.0,432.3 1236.5,432.3C1237.0,432.3 1237.5,428.2 1238.0,427.1C1238.7,425.7 1239.4,424.2 1240.1,424.2C1240.8,424.2 1241.6,425.6 1242.3,427.1C1242.9,428.3 1243.5,431.5 1244.1,435.0C1244.6,438.0 1245.2,443.9 1245.7,448.5C1246.3,453.6 1246.9,459.8 1247.5,464.2C1248.1,468.6 1248.7,473.4 1249.3,475.4C1250.0,477.9 1250.8,480.4 1251.5,480.4C1252.0,480.4 1252.6,476.3 1253.1,473.2C1253.5,470.5 1254.0,462.6 1254.5,461.9C1255.1,460.9 1255.8,460.4 1256.5,460.4C1257.4,460.4 1258.4,460.4 1259.4,460.4C1260.1,460.4 1260.9,460.7 1261.6,461.3C1262.2,461.7 1262.7,465.8 1263.2,467.6C1264.2,470.8 1265.2,472.4 1266.1,475.4C1267.0,478.3 1267.9,482.4 1268.8,485.6C1269.7,488.7 1270.6,491.9 1271.5,494.6C1272.3,496.8 1273.0,499.8 1273.8,500.6C1274.4,501.3 1275.0,502.0 1275.6,502.0C1276.7,502.0 1277.8,500.9 1279.0,499.7C1279.9,498.7 1280.9,495.8 1281.9,493.4C1282.8,491.2 1283.7,487.5 1284.6,485.6C1285.3,484.0 1286.1,481.7 1286.8,481.7C1287.4,481.7 1288.0,484.1 1288.6,485.6C1289.4,487.4 1290.1,491.0 1290.9,492.3C1291.8,493.9 1292.7,495.7 1293.6,495.7C1294.2,495.7 1294.8,494.6 1295.4,493.4C1295.9,492.4 1296.4,487.9 1297.0,486.7C1297.9,484.4 1298.9,483.3 1299.9,482.2C1300.9,481.0 1302.0,480.5 1303.0,479.5C1304.0,478.6 1305.0,478.3 1305.9,476.6C1306.5,475.6 1307.0,470.6 1307.5,468.7C1308.1,466.6 1308.7,464.1 1309.3,463.8C1310.1,463.3 1310.8,463.1 1311.6,463.1C1312.7,463.1 1313.8,464.2 1314.9,465.3C1315.9,466.3 1316.9,468.6 1317.9,470.9C1318.8,473.1 1319.7,476.7 1320.6,479.9C1321.3,482.7 1322.1,487.1 1322.8,488.9C1323.6,490.8 1324.3,493.0 1325.1,493.0C1325.8,493.0 1326.6,491.1 1327.3,490.1C1328.1,489.0 1328.8,487.4 1329.5,486.7C1330.7,485.6 1331.8,485.2 1332.9,484.4C1334.1,483.7 1335.2,482.6 1336.3,482.2C1336.9,482.0 1337.5,481.7 1338.1,481.7C1338.6,481.7 1339.1,485.5 1339.7,488.9C1340.2,492.4 1340.7,501.9 1341.2,506.9C1341.8,512.6 1342.5,519.2 1343.0,521.5C1343.6,523.8 1344.2,526.0 1344.8,526.0C1345.4,526.0 1345.9,523.5 1346.4,521.5C1346.8,520.2 1347.2,516.6 1347.5,515.9C1348.0,515.0 1348.4,514.3 1348.9,514.3C1349.3,514.3 1349.6,514.7 1350.0,515.2C1350.5,515.8 1351.0,523.6 1351.5,525.4C1351.8,526.5 1352.1,527.8 1352.4,527.8C1352.8,527.8 1353.3,523.0 1353.7,521.7C1354.3,519.8 1354.9,517.6 1355.6,517.6C1356.2,517.6 1356.8,518.3 1357.4,518.9C1358.0,519.5 1358.6,521.3 1359.3,521.7C1359.8,522.0 1360.2,522.2 1360.7,522.2C1361.2,522.2 1361.6,518.8 1362.0,517.0C1362.7,514.6 1363.3,511.3 1363.9,509.6C1364.7,507.5 1365.5,505.4 1366.3,505.0C1366.9,504.7 1367.5,504.4 1368.2,504.4C1368.6,504.4 1369.0,505.6 1369.4,506.9C1369.9,508.1 1370.3,513.2 1370.7,515.2C1371.4,518.0 1372.0,520.3 1372.6,521.7C1373.4,523.4 1374.2,524.1 1375.0,525.4C1375.9,526.8 1376.9,528.0 1377.8,530.0C1378.4,531.3 1379.0,532.6 1379.6,535.6C1380.0,537.4 1380.4,542.2 1380.7,546.7C1381.0,549.7 1381.2,555.6 1381.5,557.8C1381.8,561.0 1382.2,564.3 1382.6,564.3C1383.1,564.3 1383.7,563.1 1384.3,562.4C1384.9,561.6 1385.5,560.0 1386.1,559.6C1386.6,559.3 1387.1,559.1 1387.6,559.1C1388.1,559.1 1388.7,560.4 1389.3,561.5C1389.9,562.7 1390.5,564.8 1391.1,567.0C1391.6,568.8 1392.1,571.8 1392.6,573.5C1393.1,575.2 1393.6,577.8 1394.1,577.8C1394.7,577.8 1395.3,576.9 1395.9,576.3C1396.5,575.7 1397.2,574.2 1397.8,574.1C1398.3,574.0 1398.8,573.9 1399.3,573.9C1399.8,573.9 1400.4,575.2 1400.9,576.3C1401.5,577.6 1402.2,579.9 1402.8,582.8C1403.2,584.8 1403.6,587.7 1404.1,591.1C1404.4,594.0 1404.8,599.3 1405.2,602.2C1405.6,605.6 1406.0,608.8 1406.5,610.6C1407.1,613.1 1407.7,614.8 1408.3,616.1C1409.1,617.8 1409.9,618.8 1410.7,619.8C1411.5,620.7 1412.2,622.0 1413.0,622.0C1413.6,622.0 1414.2,621.9 1414.8,621.7C1415.3,621.5 1415.8,619.1 1416.3,617.0C1416.7,615.3 1417.2,611.4 1417.6,609.6C1418.2,607.0 1418.8,605.0 1419.4,603.7C1420.1,602.4 1420.7,600.9 1421.3,600.9C1421.8,600.9 1422.3,601.1 1422.8,601.3C1423.2,601.5 1423.6,603.3 1424.1,604.1C1424.6,604.9 1425.1,606.3 1425.6,606.3C1425.9,606.3 1426.3,606.2 1426.7,605.9C1426.9,605.8 1427.2,602.2 1427.4,600.4C1427.8,597.2 1428.3,593.2 1428.7,591.1C1429.3,588.1 1429.9,585.6 1430.6,584.6C1431.2,583.7 1431.8,583.0 1432.4,582.8C1433.0,582.6 1433.6,582.4 1434.3,582.4C1435.1,582.4 1435.9,583.3 1436.7,583.7C1437.4,584.1 1438.2,584.9 1438.9,585.0C1439.8,585.1 1440.7,585.1 1441.7,585.2C1442.6,585.3 1443.5,585.5 1444.4,585.9C1444.9,586.2 1445.4,586.6 1445.9,587.4C1446.4,588.2 1446.8,591.4 1447.2,594.8C1447.5,597.3 1447.8,603.3 1448.2,605.9C1448.5,608.5 1448.8,611.9 1449.1,611.9C1449.4,611.9 1449.7,611.7 1450.0,611.5C1450.4,611.2 1450.7,605.8 1451.1,602.2C1451.5,598.6 1451.8,592.7 1452.2,589.3C1452.7,584.7 1453.2,580.9 1453.7,578.1C1454.2,575.4 1454.7,572.6 1455.2,571.7C1455.8,570.5 1456.4,569.4 1457.0,569.4C1457.7,569.4 1458.3,570.0 1458.9,570.7C1459.4,571.3 1459.9,573.3 1460.4,575.4C1460.8,577.2 1461.2,581.1 1461.7,583.7C1462.1,586.3 1462.5,590.0 1463.0,591.1C1463.6,592.6 1464.2,593.6 1464.8,593.9C1465.6,594.2 1466.3,594.4 1467.0,594.4C1467.8,594.4 1468.6,594.4 1469.4,594.3C1469.9,594.2 1470.3,592.8 1470.7,592.0C1471.2,591.2 1471.7,589.8 1472.2,589.3C1473.0,588.5 1473.7,588.3 1474.4,587.8C1475.1,587.3 1475.7,587.1 1476.3,586.1C1476.7,585.5 1477.0,582.6 1477.4,580.9C1477.8,579.2 1478.2,576.6 1478.5,575.9C1479.0,575.1 1479.5,574.4 1480.0,574.4C1480.5,574.4 1481.0,575.4 1481.5,575.9C1482.1,576.6 1482.7,578.1 1483.3,578.1C1483.8,578.1 1484.3,578.1 1484.8,578.1C1485.2,578.1 1485.7,576.6 1486.1,576.3C1486.7,575.8 1487.3,575.4 1488.0,575.4C1488.4,575.4 1488.8,576.7 1489.3,578.1C1489.6,579.4 1490.0,584.5 1490.4,585.6C1490.8,586.8 1491.2,587.8 1491.7,588.0C1492.3,588.2 1492.9,588.2 1493.5,588.3C1494.3,588.5 1495.1,588.5 1495.9,588.7C1496.5,588.9 1497.0,589.6 1497.6,590.7C1498.1,591.7 1498.6,596.1 1499.1,598.5C1499.7,601.5 1500.3,604.6 1500.9,606.9C1501.4,608.7 1501.9,611.5 1502.4,611.5C1502.8,611.5 1503.3,611.5 1503.7,611.5C1504.2,611.5 1504.7,609.2 1505.2,607.8C1505.6,606.6 1506.0,604.0 1506.5,603.7C1506.9,603.4 1507.3,603.1 1507.8,603.1C1508.2,603.1 1508.5,605.7 1508.9,606.9C1509.4,608.4 1509.9,610.2 1510.4,611.5C1511.0,613.1 1511.6,614.9 1512.2,615.7C1512.8,616.6 1513.5,617.6 1514.1,617.6C1514.6,617.6 1515.2,617.5 1515.7,617.4C1516.0,617.3 1516.4,615.1 1516.7,613.3C1517.0,611.6 1517.3,607.5 1517.6,605.9C1518.0,603.7 1518.5,601.8 1518.9,601.3C1519.5,600.5 1520.1,600.0 1520.7,600.0C1521.5,600.0 1522.3,600.0 1523.2,600.0C1523.8,600.0 1524.4,600.6 1525.0,600.9C1525.6,601.3 1526.2,601.8 1526.8,602.2" fill="none" stroke="#ff9500" stroke-width="1.55" stroke-linejoin="round" stroke-linecap="round"/>
<path d="M113.5,605.3C114.1,607.1 114.8,609.8 115.4,610.7C116.3,612.0 117.1,613.2 117.9,613.2C118.6,613.2 119.2,609.9 119.9,607.0C120.7,603.5 121.5,593.8 122.3,588.5C123.0,584.3 123.7,578.6 124.3,577.4C124.8,576.5 125.3,575.7 125.8,575.7C126.3,575.7 126.8,578.5 127.3,581.1C127.9,584.6 128.6,594.3 129.3,600.9C129.8,606.6 130.4,615.1 131.0,618.1C131.6,621.2 132.1,624.3 132.7,624.3C133.4,624.3 134.0,623.9 134.7,623.6C135.7,623.0 136.7,621.2 137.7,620.1C138.6,619.0 139.6,616.9 140.6,616.9C141.1,616.9 141.6,618.8 142.1,620.6C142.5,622.2 142.9,628.7 143.3,629.3C144.2,630.4 145.0,631.0 145.8,631.0C146.9,631.0 147.9,631.0 149.0,631.0C150.2,631.0 151.3,633.5 152.5,633.5C153.0,633.5 153.5,630.6 153.9,628.0C154.4,625.8 154.8,618.4 155.2,616.9C155.8,614.9 156.3,613.9 156.9,613.2C157.7,612.2 158.6,612.4 159.4,611.2C160.0,610.3 160.7,605.9 161.4,600.9C161.9,597.1 162.3,584.2 162.8,581.1C163.3,578.0 163.8,576.0 164.3,574.9C165.3,572.7 166.3,572.8 167.3,570.7C167.9,569.4 168.6,565.9 169.3,563.8C170.1,561.3 170.9,557.9 171.7,556.9C172.7,555.7 173.7,554.7 174.7,554.7C175.3,554.7 176.0,555.2 176.7,556.4C176.9,556.9 177.2,561.7 177.4,568.8C177.5,572.3 177.7,585.2 177.8,593.5C177.9,601.7 178.0,614.4 178.2,618.1C178.5,628.2 178.8,632.1 179.1,635.4C179.6,640.3 180.1,644.3 180.6,645.3C181.4,646.8 182.1,647.8 182.8,647.8C184.1,647.8 185.3,647.8 186.5,647.8C187.8,647.8 189.0,646.5 190.2,646.5C191.6,646.5 193.0,646.5 194.4,646.5C195.1,646.5 195.8,649.0 196.4,650.2C197.1,651.5 197.7,654.0 198.4,654.2C199.4,654.5 200.4,654.7 201.4,654.7C202.2,654.7 203.0,654.1 203.8,653.2C204.5,652.5 205.1,647.6 205.8,642.8C206.4,638.7 207.0,628.4 207.5,623.1C207.9,619.2 208.4,614.1 208.8,613.2C209.3,612.2 209.8,611.5 210.2,611.5C210.7,611.5 211.2,614.1 211.7,615.7C212.2,617.3 212.7,620.3 213.2,621.1C213.7,621.9 214.2,622.6 214.7,622.6C215.2,622.6 215.7,618.7 216.2,615.7C216.6,613.1 217.0,606.4 217.4,604.6C217.8,602.7 218.2,600.9 218.6,600.9C219.1,600.9 219.6,603.2 220.1,605.8C220.6,608.4 221.1,617.0 221.6,623.1C222.1,629.3 222.6,638.4 223.1,642.8C223.6,647.2 224.1,651.6 224.6,652.7C225.2,654.2 225.9,655.2 226.5,655.2C227.4,655.2 228.2,653.8 229.0,652.7C229.8,651.6 230.7,649.2 231.5,647.8C232.1,646.6 232.8,644.6 233.5,644.6C234.1,644.6 234.8,645.7 235.4,646.5C236.0,647.3 236.6,649.5 237.2,649.5C237.7,649.5 238.3,646.6 238.9,645.3C239.5,643.8 240.2,641.1 240.9,641.1C241.7,641.1 242.5,642.1 243.3,642.8C244.2,643.6 245.0,645.5 245.8,646.0C246.8,646.7 247.8,647.3 248.8,647.3C249.6,647.3 250.4,646.9 251.2,646.5C251.9,646.3 252.6,645.3 253.2,645.3C253.9,645.3 254.5,646.5 255.2,647.8C255.8,649.0 256.5,652.7 257.2,655.2C257.8,657.7 258.5,661.4 259.1,662.6C259.8,663.8 260.5,665.1 261.1,665.1C261.9,665.1 262.6,660.5 263.4,657.7C264.5,653.4 265.6,646.3 266.8,642.0C267.9,637.6 269.0,632.4 270.1,630.7C270.9,629.6 271.6,628.5 272.4,628.5C273.1,628.5 273.9,630.6 274.6,633.0C275.4,635.3 276.1,644.4 276.9,650.9C277.5,656.1 278.1,665.8 278.7,667.8C279.2,669.6 279.7,671.2 280.2,671.2C280.8,671.2 281.3,666.2 281.8,664.4C282.4,662.4 283.0,659.5 283.6,659.5C284.1,659.5 284.7,661.6 285.2,663.3C285.8,665.2 286.4,671.4 287.0,672.3C288.1,674.1 289.2,674.1 290.4,675.2C291.5,676.3 292.6,677.6 293.7,679.0C294.9,680.5 296.0,683.0 297.1,684.2C297.9,685.1 298.8,686.2 299.6,686.2C300.6,686.2 301.7,684.8 302.7,684.0C304.2,682.8 305.7,681.6 307.2,680.2C308.6,678.9 309.9,677.6 311.3,675.7C312.4,674.1 313.5,672.3 314.6,668.9C315.3,666.9 316.0,660.7 316.7,658.8C317.4,656.7 318.2,654.5 318.9,654.5C319.9,654.5 320.9,657.3 321.8,658.1C323.0,659.1 324.1,659.7 325.2,660.4C326.3,661.1 327.5,661.4 328.6,662.2C329.7,663.0 330.8,664.9 332.0,666.2C332.7,667.1 333.5,668.9 334.2,668.9C335.0,668.9 335.7,664.9 336.5,664.4C337.6,663.8 338.7,663.3 339.8,663.3C341.3,663.3 342.8,663.7 344.3,664.0C345.8,664.3 347.3,664.9 348.8,666.0C349.6,666.6 350.3,667.9 351.1,670.1C351.6,671.5 352.1,679.0 352.6,679.0C353.4,679.0 354.1,678.5 354.9,677.9C355.6,677.4 356.4,675.2 357.1,675.2C357.9,675.2 358.6,675.9 359.4,676.8C360.0,677.5 360.6,681.4 361.2,684.7C361.8,688.0 362.4,695.4 363.0,698.2C363.7,701.6 364.5,705.4 365.2,705.4C366.1,705.4 367.0,703.1 367.9,701.5C368.8,700.0 369.7,697.1 370.6,695.9C371.4,694.9 372.1,693.7 372.9,693.7C373.5,693.7 374.1,696.5 374.7,698.2C375.3,699.8 375.9,703.6 376.5,703.8C377.8,704.1 379.0,704.2 380.3,704.2C381.8,704.2 383.3,704.1 384.8,703.8C385.6,703.6 386.3,701.1 387.1,700.4C387.6,699.9 388.1,699.3 388.6,699.3C389.1,699.3 389.5,703.4 390.0,706.0C390.5,709.1 391.0,717.3 391.6,717.3C392.3,717.3 393.1,716.6 393.8,716.2C394.9,715.5 396.0,713.7 397.2,713.5C398.7,713.2 400.2,713.0 401.7,713.0C402.8,713.0 403.9,713.4 405.0,713.9C406.2,714.4 407.3,717.2 408.4,718.0C409.5,718.7 410.7,719.5 411.8,719.5C412.9,719.5 414.0,719.5 415.2,719.5C416.3,719.5 417.4,722.0 418.5,722.5C419.7,722.9 420.8,723.4 421.9,723.4C423.0,723.4 424.2,722.0 425.3,721.1C425.9,720.6 426.5,719.5 427.1,719.5C427.8,719.5 428.4,721.3 429.1,721.8C429.9,722.3 430.6,722.9 431.4,722.9C432.3,722.9 433.3,718.3 434.3,717.3C435.4,716.2 436.5,715.0 437.6,715.0C438.4,715.0 439.1,715.1 439.9,715.3C440.6,715.4 441.4,718.0 442.1,718.0C442.7,718.0 443.3,717.7 443.9,717.3C444.7,716.8 445.4,712.2 446.2,710.5C447.5,707.6 448.7,705.4 450.0,703.8C451.3,702.2 452.6,700.0 453.8,700.0C454.8,700.0 455.8,700.2 456.8,700.4C457.9,700.7 459.0,703.3 460.1,703.3C460.9,703.3 461.6,703.1 462.4,702.7C463.0,702.3 463.6,699.0 464.2,698.2C464.7,697.4 465.2,696.6 465.8,696.6C466.5,696.6 467.3,698.2 468.0,698.2C469.0,698.2 470.0,697.2 470.9,695.9C471.8,694.7 472.7,688.4 473.6,684.7C474.4,681.5 475.1,676.5 475.9,675.2C476.4,674.3 476.9,673.4 477.4,673.4C478.1,673.4 478.6,675.9 479.2,676.8C480.0,678.0 480.8,679.7 481.5,679.7C482.2,679.7 483.0,678.6 483.8,677.9C484.4,677.4 484.9,676.4 485.6,676.4C486.1,676.4 486.6,682.1 487.1,686.9C487.5,690.4 487.9,700.0 488.2,702.7C488.8,706.5 489.3,709.4 489.8,710.1C491.2,711.9 492.5,712.4 493.9,712.8C495.0,713.1 496.1,713.5 497.2,713.5C498.2,713.5 499.2,710.5 500.2,710.5C501.4,710.5 502.7,710.5 504.0,710.5C504.7,710.5 505.5,712.3 506.2,713.5C506.8,714.4 507.4,716.6 508.0,716.6C508.9,716.6 509.8,716.1 510.7,715.7C511.9,715.2 513.0,713.1 514.1,712.8C515.2,712.4 516.4,712.1 517.5,712.1C518.5,712.1 519.4,713.0 520.4,714.4C520.9,715.1 521.4,719.7 522.0,720.6C522.5,721.6 523.0,722.5 523.5,722.5C524.3,722.5 525.0,720.8 525.8,720.2C526.4,719.7 527.0,719.1 527.6,719.1C528.3,719.1 529.1,721.4 529.8,721.8C530.6,722.1 531.3,722.5 532.1,722.5C532.7,722.5 533.3,714.1 533.9,712.8C534.4,711.6 534.9,710.5 535.5,710.5C536.2,710.5 537.0,711.6 537.7,712.1C538.5,712.6 539.2,713.5 540.0,713.5C540.7,713.5 541.5,710.0 542.2,707.2C543.0,704.3 543.7,697.7 544.5,693.7C545.0,690.8 545.5,686.4 546.0,685.8C546.6,685.1 547.2,684.7 547.8,684.7C548.4,684.7 549.0,691.2 549.6,693.7C550.2,696.1 550.8,700.0 551.4,700.0C552.0,700.0 552.5,694.3 553.0,692.5C553.5,690.8 554.1,688.5 554.6,688.5C555.2,688.5 555.8,692.6 556.4,694.8C556.9,696.7 557.4,700.6 558.0,700.9C559.1,701.3 560.2,701.5 561.3,701.5C562.5,701.5 563.6,701.0 564.7,700.4C565.8,699.8 566.9,697.4 568.1,694.8C569.2,692.2 570.3,686.2 571.5,682.4C572.4,679.2 573.4,674.6 574.4,673.4C575.6,671.9 576.9,671.6 578.2,670.7C579.3,670.0 580.4,670.0 581.6,668.5C582.1,667.8 582.6,662.6 583.1,655.4C583.4,652.4 583.6,642.3 583.8,637.5C584.2,629.2 584.6,622.5 584.9,617.2C585.5,609.8 586.0,602.8 586.5,599.2C587.5,592.5 588.5,589.7 589.4,585.7C590.6,581.1 591.7,577.5 592.8,573.4C593.7,570.0 594.6,565.3 595.5,563.2C596.5,561.0 597.5,559.0 598.4,558.3C599.4,557.6 600.4,557.0 601.4,557.0C602.0,557.0 602.5,558.9 603.1,561.0C603.6,562.5 604.0,568.4 604.5,570.0C605.0,571.6 605.4,573.4 605.9,573.4C606.4,573.4 606.9,568.8 607.4,567.7C608.3,566.0 609.1,564.2 610.0,564.2C611.1,564.2 612.1,571.8 613.2,575.4C614.0,578.1 614.8,582.0 615.6,583.4C616.0,584.2 616.5,585.0 616.9,585.0C617.3,585.0 617.6,582.2 618.0,580.2C618.4,578.0 618.9,572.2 619.3,571.4C619.8,570.4 620.4,569.9 620.9,569.8C621.8,569.6 622.7,569.5 623.6,569.5C624.3,569.5 625.0,569.8 625.7,570.6C626.1,571.0 626.5,573.8 626.9,577.0C627.1,579.3 627.4,586.9 627.6,589.8C628.2,595.8 628.7,599.8 629.2,602.7C630.1,607.1 630.9,609.8 631.7,612.3C632.5,614.8 633.3,617.3 634.1,618.4C634.8,619.3 635.5,620.3 636.1,620.3C636.6,620.3 637.1,618.9 637.6,617.9C638.3,616.5 639.0,613.7 639.7,612.3C640.4,610.9 641.1,610.3 641.8,609.1C642.4,608.0 643.1,607.4 643.7,605.1C644.0,603.9 644.3,600.7 644.6,596.3C644.9,593.3 645.1,586.4 645.3,580.2C645.5,575.6 645.6,569.5 645.8,564.2C645.9,558.8 646.1,553.2 646.3,548.1C646.5,541.4 646.7,532.6 646.9,528.9C647.2,523.3 647.5,519.0 647.9,517.6C648.5,515.3 649.0,515.2 649.6,513.6C650.2,512.1 650.8,510.2 651.4,508.0C652.3,504.5 653.2,496.2 654.2,494.6C654.6,493.8 655.1,493.0 655.5,493.0C656.0,493.0 656.4,496.1 656.9,497.9C657.3,499.8 657.8,504.0 658.2,504.2C659.0,504.5 659.7,504.7 660.5,504.7C661.4,504.7 662.3,503.6 663.2,503.6C664.2,503.6 665.1,503.8 666.1,504.2C666.9,504.5 667.6,505.7 668.4,506.9C669.1,508.1 669.9,510.0 670.6,512.5C671.1,514.3 671.6,518.5 672.2,520.4C672.8,522.6 673.4,525.0 674.0,525.6C675.1,526.8 676.2,526.7 677.3,527.6C678.1,528.2 678.8,528.9 679.6,530.5C680.1,531.7 680.6,537.0 681.2,539.5C681.6,541.7 682.1,545.1 682.5,545.1C683.0,545.1 683.6,540.6 684.1,538.4C684.6,536.2 685.1,532.4 685.7,532.1C686.1,531.8 686.6,531.7 687.0,531.7C687.5,531.7 688.1,534.2 688.6,535.0C689.2,536.0 689.8,537.3 690.4,537.3C691.3,537.3 692.2,535.8 693.1,535.0C694.2,534.0 695.3,532.8 696.5,531.7C697.2,530.9 698.0,530.7 698.7,529.4C699.3,528.4 699.9,522.6 700.5,520.4C701.0,518.5 701.6,515.9 702.1,515.9C702.5,515.9 702.8,518.8 703.2,521.5C703.6,524.3 704.0,533.7 704.3,536.2C704.9,539.6 705.4,542.9 705.9,542.9C706.6,542.9 707.4,541.6 708.1,540.6C709.1,539.4 710.1,536.3 711.1,535.0C711.8,534.1 712.6,532.8 713.3,532.8C713.8,532.8 714.4,535.1 714.9,536.2C715.5,537.4 716.1,539.5 716.7,539.5C717.8,539.5 718.9,539.2 720.1,539.1C721.0,539.0 722.0,538.9 723.0,538.9C723.7,538.9 724.5,540.3 725.2,541.8C725.9,543.1 726.6,547.2 727.3,549.6C727.7,551.3 728.2,551.6 728.6,554.2C728.9,556.0 729.2,562.6 729.5,570.0C729.7,575.6 730.0,586.7 730.2,597.0C730.4,605.4 730.6,618.2 730.8,626.2C730.9,634.2 731.1,643.8 731.3,646.5C731.7,651.7 732.1,655.4 732.4,655.4C733.2,655.4 733.9,653.5 734.7,652.1C735.8,649.9 736.9,645.7 738.1,642.0C739.2,638.2 740.3,632.7 741.4,629.6C742.2,627.5 742.9,625.0 743.7,624.4C744.4,623.8 745.2,623.3 745.9,623.3C746.8,623.3 747.7,624.0 748.6,625.1C749.4,625.9 750.1,629.3 750.9,633.0C751.5,635.9 752.1,641.3 752.7,646.5C753.2,651.0 753.7,659.3 754.2,662.2C754.9,665.5 755.4,668.9 756.0,668.9C756.8,668.9 757.5,667.9 758.3,666.7C759.0,665.5 759.8,662.4 760.5,657.7C760.9,655.3 761.3,646.3 761.7,644.2C762.2,641.2 762.7,638.7 763.2,638.6C764.2,638.3 765.2,638.3 766.2,638.1C767.1,637.9 768.1,637.9 769.1,637.5C769.6,637.2 770.1,630.5 770.7,626.2C771.4,620.0 772.2,609.4 772.9,603.7C773.5,599.1 774.1,593.3 774.7,592.5C775.2,591.8 775.6,591.4 776.1,591.4C776.5,591.4 777.0,594.2 777.4,597.0C778.0,600.6 778.6,612.4 779.2,619.5C780.0,628.3 780.7,639.2 781.5,644.2C782.2,649.2 783.0,653.9 783.7,655.0C784.8,656.6 785.8,656.4 786.9,657.7C787.8,658.9 788.8,663.6 789.8,664.4C790.9,665.4 792.0,666.0 793.1,666.2C794.3,666.5 795.4,666.4 796.5,666.7C797.4,666.9 798.3,669.9 799.2,672.3C800.0,674.5 800.9,680.7 801.7,681.3C802.6,682.0 803.5,682.4 804.4,682.4C805.5,682.4 806.6,680.8 807.8,680.2C808.9,679.6 810.0,678.6 811.1,678.6C811.7,678.6 812.2,680.8 812.7,682.4C813.3,684.3 813.9,688.4 814.5,690.3C815.5,693.3 816.5,694.5 817.4,697.0C818.3,699.4 819.2,703.1 820.1,704.9C820.7,706.1 821.3,707.8 821.9,707.8C822.4,707.8 822.8,705.8 823.3,703.8C823.7,702.1 824.0,695.6 824.4,694.8C825.1,693.3 825.8,692.3 826.4,692.3C827.7,692.3 829.0,692.5 830.2,692.8C831.0,693.0 831.8,697.3 832.5,697.7C833.6,698.4 834.8,698.8 835.9,698.8C836.8,698.8 837.7,698.4 838.6,697.7C839.3,697.2 840.1,691.9 840.8,690.3C841.8,688.2 842.8,687.5 843.8,685.8C844.5,684.5 845.2,683.2 846.0,681.3C846.5,680.0 847.0,676.9 847.6,676.4C848.2,675.7 848.8,675.2 849.4,675.2C850.1,675.2 850.9,677.5 851.6,679.0C852.5,680.9 853.4,683.7 854.3,685.8C855.1,687.5 855.8,690.8 856.6,690.8C857.2,690.8 857.8,687.0 858.4,684.7C859.1,681.8 859.9,676.6 860.6,674.5C861.4,672.5 862.1,670.8 862.9,670.1C863.5,669.5 864.1,668.9 864.7,668.9C865.3,668.9 866.0,671.9 866.7,673.0C867.3,673.9 867.9,675.2 868.5,675.2C869.2,675.2 870.0,673.6 870.7,672.3C871.7,670.6 872.7,666.1 873.6,664.4C874.4,663.1 875.1,661.5 875.9,661.5C876.6,661.5 877.4,664.6 878.1,665.6C878.9,666.5 879.6,667.8 880.4,667.8C881.3,667.8 882.2,666.3 883.1,664.4C883.9,662.9 884.6,658.3 885.4,653.2C886.0,649.1 886.5,643.3 887.1,635.2C887.6,629.1 888.0,619.2 888.5,608.2C888.8,600.9 889.1,588.5 889.4,581.2C889.7,574.1 890.0,568.9 890.3,563.2C890.7,556.1 891.0,545.9 891.4,542.9C891.9,539.3 892.3,536.7 892.8,536.2C893.7,535.0 894.6,534.4 895.5,534.4C896.6,534.4 897.7,534.4 898.8,534.4C899.4,534.4 900.0,532.2 900.6,530.5C901.4,528.5 902.1,523.9 902.9,521.5C903.8,518.8 904.7,517.2 905.6,514.8C906.5,512.4 907.4,509.8 908.3,506.9C909.3,503.8 910.2,500.0 911.2,496.8C912.2,493.6 913.2,490.5 914.1,487.8C915.0,485.3 915.9,482.3 916.8,481.1C917.4,480.2 918.0,479.3 918.6,479.3C919.2,479.3 919.7,481.1 920.2,482.2C920.8,483.4 921.4,486.2 922.0,486.2C922.5,486.2 923.1,486.2 923.6,486.2C924.2,486.2 924.8,482.4 925.4,479.9C926.1,476.9 926.9,472.4 927.6,468.7C928.4,464.9 929.1,460.1 929.9,457.4C930.6,454.8 931.4,452.0 932.1,451.1C932.9,450.3 933.6,449.6 934.4,449.6C935.0,449.6 935.7,450.6 936.4,451.8C937.0,453.0 937.6,457.9 938.2,461.9C938.7,465.5 939.2,471.2 939.8,475.4C940.4,480.2 941.0,485.3 941.6,488.9C942.3,493.5 943.1,498.5 943.8,500.2C944.6,501.9 945.3,503.6 946.1,503.6C946.7,503.6 947.3,500.8 947.9,499.1C948.4,497.5 948.9,494.1 949.4,493.4C950.6,492.1 951.7,491.7 952.8,491.2C953.9,490.7 955.1,490.1 956.2,490.1C956.9,490.1 957.7,490.1 958.4,490.1C959.0,490.1 959.5,490.8 960.0,491.8C960.7,493.1 961.3,504.0 962.0,507.6C963.0,513.0 963.9,516.8 964.9,519.5C966.0,522.5 967.2,522.8 968.3,526.4C968.8,528.1 969.3,531.0 969.9,535.3C970.4,539.6 970.9,550.5 971.5,559.0C971.9,566.3 972.4,579.5 972.8,582.6C973.5,587.1 974.1,588.0 974.8,590.5C975.7,593.9 976.5,595.9 977.4,600.4C978.0,603.9 978.7,612.5 979.3,616.2C979.9,619.1 980.4,623.1 980.9,623.1C981.4,623.1 981.8,619.4 982.3,616.2C982.9,612.0 983.5,602.1 984.1,594.5C984.6,587.7 985.1,580.0 985.7,572.8C986.2,565.5 986.7,555.6 987.2,551.0C987.7,547.1 988.2,542.2 988.6,542.2C989.0,542.2 989.4,546.9 989.8,551.0C990.2,555.3 990.6,568.5 991.0,572.8C991.5,578.5 992.0,583.1 992.6,584.6C993.2,586.5 993.9,588.0 994.5,588.0C995.2,588.0 995.9,587.9 996.5,587.6C996.8,587.4 997.2,583.1 997.5,578.7C997.8,575.1 998.0,565.2 998.3,559.0C998.6,552.7 998.8,543.9 999.1,541.2C999.4,537.8 999.7,535.0 1000.1,534.7C1000.9,534.0 1001.6,534.0 1002.4,533.7C1003.3,533.4 1004.1,533.5 1005.0,532.9C1005.3,532.7 1005.7,525.8 1006.0,522.4C1006.3,519.1 1006.6,513.9 1007.0,512.6C1007.5,510.4 1008.0,508.6 1008.5,508.6C1009.1,508.6 1009.7,510.0 1010.3,511.6C1010.9,513.0 1011.4,516.6 1011.9,521.5C1012.4,525.7 1012.8,536.6 1013.3,545.1C1013.7,552.4 1014.1,565.1 1014.5,568.8C1014.9,572.6 1015.3,576.1 1015.7,576.1C1016.1,576.1 1016.4,571.0 1016.8,566.8C1017.3,561.9 1017.8,550.0 1018.2,543.2C1018.9,533.3 1019.5,524.5 1020.2,517.5C1020.9,510.5 1021.5,502.5 1022.2,499.7C1022.6,497.8 1023.1,495.8 1023.5,495.8C1023.9,495.8 1024.3,499.8 1024.7,503.7C1025.2,508.2 1025.7,522.8 1026.1,531.3C1026.6,539.8 1027.0,549.6 1027.5,555.0C1028.0,561.1 1028.6,566.7 1029.1,568.8C1029.7,571.4 1030.4,573.8 1031.0,573.8C1031.6,573.8 1032.1,569.4 1032.6,566.8C1033.3,563.7 1033.9,558.3 1034.6,556.0C1035.4,553.2 1036.2,551.2 1037.0,550.1C1037.6,549.1 1038.3,548.1 1039.0,548.1C1039.5,548.1 1040.0,549.1 1040.5,551.0C1040.9,552.2 1041.2,562.8 1041.5,568.8C1042.0,577.3 1042.4,586.2 1042.9,594.5C1043.4,604.0 1043.9,617.5 1044.5,622.1C1045.1,627.3 1045.7,632.4 1046.2,632.4C1046.8,632.4 1047.3,626.0 1047.8,622.1C1048.3,618.7 1048.8,612.0 1049.2,610.3C1049.6,608.8 1050.0,607.3 1050.4,607.3C1050.9,607.3 1051.4,610.4 1052.0,612.2C1052.5,614.0 1053.0,617.0 1053.5,618.2C1053.9,619.1 1054.3,620.1 1054.7,620.1C1055.0,620.1 1055.3,614.5 1055.5,608.3C1055.7,603.6 1055.9,590.7 1056.1,578.7C1056.2,570.7 1056.4,555.7 1056.5,549.1C1056.7,539.1 1056.9,529.5 1057.1,527.4C1057.5,523.0 1057.9,520.5 1058.3,520.5C1058.9,520.5 1059.6,522.6 1060.3,524.4C1061.0,526.6 1061.8,530.8 1062.6,535.3C1063.4,539.8 1064.2,544.7 1065.0,553.0C1065.5,558.6 1066.1,567.4 1066.6,578.7C1067.0,587.1 1067.4,605.3 1067.8,614.2C1068.2,623.2 1068.6,631.1 1069.0,635.9C1069.1,637.7 1069.2,640.1 1069.4,640.1C1069.9,640.1 1070.4,636.7 1071.0,635.2C1071.5,633.5 1072.2,631.3 1072.8,630.7C1073.3,630.1 1074.0,629.6 1074.5,629.6C1075.2,629.6 1075.9,631.1 1076.6,631.4C1077.1,631.6 1077.6,631.8 1078.2,631.8C1078.5,631.8 1078.8,628.0 1079.0,624.0C1079.3,619.9 1079.7,603.0 1080.0,597.0C1080.2,591.0 1080.5,584.2 1080.8,583.5C1081.1,582.8 1081.5,582.4 1081.8,582.4C1082.0,582.4 1082.4,586.7 1082.7,590.2C1083.0,594.6 1083.4,607.4 1083.8,610.5C1084.4,615.4 1085.0,618.6 1085.6,619.5C1086.7,621.1 1087.8,621.3 1088.9,622.2C1090.1,623.0 1091.2,623.0 1092.3,624.4C1092.8,625.1 1093.4,627.7 1093.9,630.7C1094.3,633.3 1094.8,640.9 1095.2,644.2C1095.7,647.5 1096.1,652.1 1096.6,652.1C1097.0,652.1 1097.5,650.3 1097.9,648.7C1098.5,646.5 1099.1,639.4 1099.7,635.2C1100.4,630.4 1101.1,624.9 1101.8,621.7C1102.4,618.8 1103.0,616.1 1103.6,615.0C1104.0,614.1 1104.5,613.2 1104.9,613.2C1105.3,613.2 1105.7,616.9 1106.0,619.5C1106.5,622.6 1106.9,630.1 1107.4,631.8C1107.8,633.6 1108.3,635.2 1108.7,635.2C1109.3,635.2 1109.8,631.7 1110.3,630.7C1110.9,629.5 1111.5,628.0 1112.1,628.0C1112.8,628.0 1113.5,628.5 1114.1,628.9C1114.9,629.3 1115.6,630.7 1116.4,630.7C1117.0,630.7 1117.6,629.8 1118.2,628.5C1118.6,627.6 1118.9,622.2 1119.3,620.6C1120.0,617.3 1120.8,616.1 1121.5,613.8C1122.5,611.2 1123.3,609.5 1124.2,606.0C1125.0,603.0 1125.8,597.6 1126.5,592.5C1127.2,587.3 1128.0,581.2 1128.8,574.5C1129.3,569.2 1129.9,562.0 1130.5,556.5C1131.1,551.6 1131.6,547.1 1132.1,542.9C1132.7,538.1 1133.3,533.8 1133.9,529.4C1134.7,524.0 1135.4,520.2 1136.2,513.7C1136.8,508.5 1137.4,500.6 1138.0,493.4C1138.5,487.1 1139.0,478.3 1139.5,473.2C1140.1,468.1 1140.6,463.0 1141.1,460.8C1141.7,458.3 1142.3,455.6 1142.9,455.6C1143.4,455.6 1143.8,456.9 1144.3,458.6C1144.7,460.3 1145.2,470.5 1145.6,477.7C1146.1,484.9 1146.5,494.4 1147.0,502.4C1147.5,511.7 1148.0,523.8 1148.5,529.4C1149.1,535.1 1149.6,540.7 1150.1,541.8C1150.6,542.7 1151.0,543.4 1151.5,543.4C1152.0,543.4 1152.5,540.7 1153.0,538.4C1153.8,535.1 1154.5,527.6 1155.3,520.4C1156.0,513.2 1156.8,502.0 1157.5,493.4C1158.3,484.8 1159.0,475.1 1159.8,468.7C1160.3,464.2 1160.8,459.4 1161.3,457.4C1161.8,455.8 1162.2,454.1 1162.7,454.1C1163.1,454.1 1163.5,457.7 1163.8,461.9C1164.2,466.1 1164.6,485.4 1165.0,493.4C1165.2,499.8 1165.5,507.3 1165.8,509.2C1166.1,511.0 1166.5,512.5 1166.8,512.5C1167.2,512.5 1167.6,509.7 1168.1,508.1C1168.5,506.4 1169.0,503.4 1169.5,502.4C1170.0,501.3 1170.5,500.2 1171.0,500.2C1171.5,500.2 1171.9,503.2 1172.4,506.9C1172.7,509.4 1173.0,518.0 1173.3,524.9C1173.5,530.1 1173.7,537.8 1173.9,542.9C1174.2,548.1 1174.4,550.3 1174.6,556.5C1174.8,560.6 1174.9,569.8 1175.1,574.5C1175.4,584.0 1175.7,593.8 1176.0,597.0C1176.4,601.7 1176.9,605.3 1177.3,605.5C1178.0,605.8 1178.7,606.0 1179.3,606.0C1180.2,606.0 1181.0,605.5 1181.8,604.8C1182.5,604.3 1183.2,601.7 1183.8,599.2C1184.3,597.5 1184.7,592.9 1185.2,592.0C1185.6,591.3 1185.9,590.7 1186.3,590.7C1186.7,590.7 1187.1,594.3 1187.4,597.0C1187.8,599.6 1188.2,606.6 1188.6,608.2C1189.1,610.4 1189.6,612.3 1190.1,612.3C1190.7,612.3 1191.3,610.1 1191.9,609.3C1192.5,608.6 1193.1,607.5 1193.7,607.5C1194.2,607.5 1194.6,609.7 1195.1,611.6C1195.5,613.5 1196.0,618.6 1196.4,620.6C1196.8,622.3 1197.2,624.4 1197.6,624.4C1198.1,624.4 1198.6,618.6 1199.1,617.2C1199.7,615.6 1200.3,614.2 1200.9,613.8C1201.7,613.4 1202.4,613.2 1203.2,613.2C1203.9,613.2 1204.7,614.4 1205.4,616.1C1206.0,617.3 1206.5,623.0 1207.0,626.2C1207.5,629.5 1208.0,634.6 1208.6,635.6C1208.9,636.4 1209.3,637.0 1209.7,637.0C1210.2,637.0 1210.6,633.7 1211.0,630.7C1211.6,627.3 1212.1,619.4 1212.6,612.7C1213.1,606.0 1213.7,596.4 1214.2,590.2C1214.8,583.2 1215.4,576.3 1216.0,572.2C1216.6,568.2 1217.2,564.6 1217.8,563.2C1218.5,561.7 1219.1,560.3 1219.8,560.3C1220.4,560.3 1221.0,560.5 1221.6,561.0C1222.0,561.3 1222.4,564.6 1222.7,567.7C1223.1,570.9 1223.5,580.1 1223.9,583.5C1224.4,588.2 1224.9,592.4 1225.4,593.6C1226.3,595.5 1227.1,597.0 1227.9,597.0C1228.5,597.0 1229.1,595.8 1229.7,593.6C1230.0,592.5 1230.3,583.7 1230.6,579.0C1230.9,574.3 1231.2,567.0 1231.5,565.5C1231.8,564.0 1232.1,562.8 1232.4,562.8C1232.7,562.8 1233.0,566.2 1233.3,570.0C1233.6,573.8 1233.9,589.3 1234.2,597.0C1234.5,604.7 1234.8,614.3 1235.1,617.2C1235.4,620.1 1235.7,622.8 1236.0,622.8C1236.6,622.8 1237.2,620.3 1237.8,619.5C1238.6,618.5 1239.3,617.2 1240.1,617.2C1240.7,617.2 1241.3,618.2 1241.9,619.5C1242.5,620.7 1243.1,625.8 1243.7,630.7C1244.2,635.0 1244.7,641.2 1245.2,648.7C1245.6,654.0 1246.0,663.1 1246.3,668.9C1246.7,674.9 1247.1,682.1 1247.5,684.7C1248.0,688.2 1248.5,690.2 1249.0,691.4C1249.6,692.8 1250.2,694.1 1250.8,694.1C1251.5,694.1 1252.0,693.5 1252.7,692.5C1253.0,691.9 1253.4,686.7 1253.8,684.7C1254.3,681.8 1254.8,679.1 1255.3,677.9C1256.1,676.2 1256.8,674.9 1257.6,674.5C1258.3,674.2 1259.1,673.9 1259.8,673.9C1260.4,673.9 1261.0,675.6 1261.6,676.8C1262.2,677.9 1262.7,680.2 1263.2,681.3C1264.3,683.7 1265.5,685.0 1266.6,686.9C1267.7,688.8 1268.8,690.9 1270.0,692.5C1271.1,694.2 1272.2,696.0 1273.3,697.0C1274.5,698.0 1275.6,698.8 1276.7,699.3C1277.5,699.6 1278.2,700.0 1279.0,700.0C1280.1,700.0 1281.2,699.1 1282.3,698.6C1283.5,698.1 1284.6,697.2 1285.7,697.0C1287.2,696.8 1288.7,696.6 1290.2,696.6C1291.7,696.6 1293.2,696.8 1294.7,697.0C1295.8,697.2 1296.9,698.6 1298.1,699.3C1299.2,700.0 1300.3,701.1 1301.5,701.1C1302.2,701.1 1302.9,701.1 1303.7,701.1C1304.4,701.1 1305.2,699.8 1305.9,698.2C1306.5,697.0 1307.0,691.5 1307.5,690.3C1308.1,688.9 1308.7,687.6 1309.3,687.6C1310.1,687.6 1310.8,688.7 1311.6,689.2C1312.7,689.9 1313.8,691.0 1314.9,691.4C1315.9,691.7 1316.9,692.1 1317.9,692.1C1318.6,692.1 1319.4,690.8 1320.1,690.3C1320.7,689.9 1321.3,689.2 1321.9,689.2C1322.4,689.2 1322.8,692.4 1323.3,693.7C1323.9,695.4 1324.5,698.2 1325.1,698.2C1325.8,698.2 1326.6,696.7 1327.3,695.9C1328.4,694.7 1329.6,692.5 1330.7,691.9C1331.8,691.3 1332.9,690.8 1334.0,690.8C1335.0,690.8 1336.0,691.6 1337.0,692.5C1337.9,693.4 1338.8,696.5 1339.7,697.7C1340.6,699.1 1341.6,700.6 1342.6,700.9C1343.9,701.3 1345.1,701.5 1346.4,701.5C1347.4,701.5 1348.4,701.1 1349.3,701.1C1349.6,701.1 1349.8,701.7 1350.0,701.7C1350.6,701.7 1351.1,700.0 1351.7,698.3C1352.2,696.9 1352.7,693.6 1353.2,690.5C1353.5,688.0 1353.9,682.6 1354.3,681.5C1354.7,680.1 1355.2,679.0 1355.6,679.0C1356.2,679.0 1356.7,679.1 1357.3,679.2C1357.9,679.3 1358.4,680.1 1359.0,680.1C1359.6,680.1 1360.1,680.1 1360.7,680.1C1361.2,680.1 1361.8,677.9 1362.4,677.5C1363.1,677.1 1363.9,676.8 1364.6,676.8C1365.4,676.8 1366.1,676.9 1366.9,677.2C1367.4,677.4 1368.0,678.5 1368.5,679.8C1368.9,680.7 1369.3,682.7 1369.7,684.9C1369.9,686.4 1370.2,690.4 1370.5,691.0C1370.8,691.9 1371.2,692.5 1371.6,692.5C1372.3,692.5 1372.9,691.7 1373.6,691.4C1374.3,691.0 1375.0,690.5 1375.6,690.5C1376.3,690.5 1376.9,691.9 1377.5,692.5C1378.2,693.1 1378.8,694.1 1379.5,694.1C1380.1,694.1 1380.8,693.5 1381.5,693.0C1382.2,692.4 1383.0,690.9 1383.7,689.9C1384.4,689.0 1385.1,687.6 1385.8,687.1C1386.3,686.7 1386.9,686.2 1387.4,686.2C1387.8,686.2 1388.2,687.0 1388.6,687.7C1388.9,688.3 1389.2,690.5 1389.6,691.0C1390.1,691.8 1390.5,692.5 1391.0,692.5C1391.8,692.5 1392.5,692.1 1393.3,691.8C1394.1,691.5 1395.0,690.6 1395.9,689.9C1396.5,689.4 1397.1,688.5 1397.8,688.2C1398.3,688.0 1398.9,687.7 1399.5,687.7C1399.9,687.7 1400.4,688.5 1400.8,689.4C1401.2,690.1 1401.6,692.9 1401.9,693.8C1402.6,695.5 1403.3,696.4 1404.0,697.2C1404.9,698.4 1405.8,699.2 1406.8,700.0C1407.7,700.9 1408.6,701.9 1409.6,702.3C1410.5,702.7 1411.5,703.1 1412.4,703.1C1413.1,703.1 1413.9,703.1 1414.6,703.1C1415.2,703.1 1415.8,702.3 1416.3,701.7C1416.7,701.3 1417.1,700.2 1417.5,700.0C1417.8,699.9 1418.2,699.8 1418.6,699.8C1419.1,699.8 1419.7,700.9 1420.3,701.1C1420.8,701.4 1421.4,701.7 1422.0,701.7C1422.4,701.7 1422.8,701.3 1423.3,700.6C1423.6,700.1 1423.9,696.8 1424.2,696.1C1424.7,695.0 1425.1,694.3 1425.5,694.1C1426.2,693.8 1426.9,693.6 1427.6,693.6C1428.3,693.6 1429.1,693.7 1429.8,693.8C1430.3,693.9 1430.7,694.3 1431.2,695.0C1431.5,695.4 1431.8,698.6 1432.1,699.5C1432.4,700.6 1432.8,701.7 1433.2,701.7C1433.8,701.7 1434.3,701.6 1434.9,701.5C1435.6,701.3 1436.4,700.6 1437.1,700.2C1438.1,699.8 1439.0,699.7 1439.9,699.2C1440.6,698.9 1441.3,698.5 1442.0,697.8C1442.5,697.2 1443.1,695.3 1443.7,694.7C1444.2,694.2 1444.8,693.6 1445.3,693.6C1446.0,693.6 1446.6,693.9 1447.2,694.2C1448.0,694.5 1448.7,695.0 1449.5,695.3C1450.2,695.6 1451.0,695.9 1451.7,696.1C1452.5,696.3 1453.2,696.7 1454.0,696.7C1454.7,696.7 1455.5,696.7 1456.2,696.7C1456.9,696.7 1457.5,696.9 1458.2,697.2C1458.8,697.5 1459.5,698.6 1460.2,699.5C1460.9,700.4 1461.7,701.9 1462.4,702.8C1463.0,703.6 1463.5,704.8 1464.1,704.8C1464.7,704.8 1465.2,704.3 1465.8,704.0C1466.4,703.6 1466.9,702.6 1467.5,702.3C1468.0,702.0 1468.5,701.7 1468.9,701.7C1469.3,701.7 1469.7,702.8 1470.1,703.4C1470.5,704.1 1471.0,705.7 1471.4,705.9C1471.9,706.1 1472.3,706.2 1472.8,706.2C1473.4,706.2 1474.1,705.3 1474.8,704.8C1475.5,704.2 1476.3,703.3 1477.0,702.8C1477.8,702.4 1478.5,701.7 1479.3,701.7C1480.0,701.7 1480.8,701.7 1481.5,701.7C1482.3,701.7 1483.0,702.4 1483.8,703.1C1484.5,703.6 1485.1,705.2 1485.8,706.0C1486.4,706.7 1487.1,707.9 1487.7,707.9C1488.3,707.9 1488.8,707.3 1489.4,706.8C1490.2,706.1 1490.9,704.8 1491.7,703.7C1492.4,702.7 1493.2,701.1 1493.9,700.6C1494.5,700.2 1495.0,699.8 1495.6,699.8C1496.1,699.8 1496.7,700.2 1497.3,700.6C1498.0,701.1 1498.8,702.4 1499.5,703.1C1500.5,703.9 1501.4,704.6 1502.3,705.3C1503.3,706.0 1504.2,706.6 1505.1,707.3C1505.9,708.0 1506.6,708.6 1507.4,709.6C1508.1,710.5 1508.9,712.4 1509.6,713.5C1510.4,714.7 1511.1,715.8 1511.9,716.5C1512.6,717.2 1513.2,718.1 1513.9,718.2C1514.4,718.3 1514.8,718.4 1515.3,718.4C1515.6,718.4 1516.0,717.5 1516.4,716.9C1517.0,716.0 1517.5,714.0 1518.1,713.0C1518.6,711.9 1519.2,710.8 1519.8,710.1C1520.3,709.5 1520.9,708.9 1521.4,708.8C1522.2,708.6 1522.9,708.5 1523.7,708.5C1524.6,708.5 1525.6,710.0 1526.5,710.7" fill="none" stroke="#12d6b4" stroke-width="1.55" stroke-linejoin="round" stroke-linecap="round"/>
<circle cx="1526.85" cy="602.22" r="3.3" fill="#ff9500"/>
<circle cx="1526.5" cy="710.71" r="3.3" fill="#12d6b4"/>
<line x1="741.2" x2="747.6" y1="341" y2="341" stroke="#12d6b4" stroke-width="2"/><line x1="750.6" x2="757" y1="341" y2="341" stroke="#12d6b4" stroke-width="2"/>
<text class="lg" x="760.4" y="345">Altcoin Season Index</text>
<line x1="893" x2="899.2" y1="341" y2="341" stroke="#ff9500" stroke-width="2"/><line x1="902.2" x2="908.4" y1="341" y2="341" stroke="#ff9500" stroke-width="2"/>
<text class="lg" x="911.6" y="345">BTC Close</text>
</svg>
</body></html>
